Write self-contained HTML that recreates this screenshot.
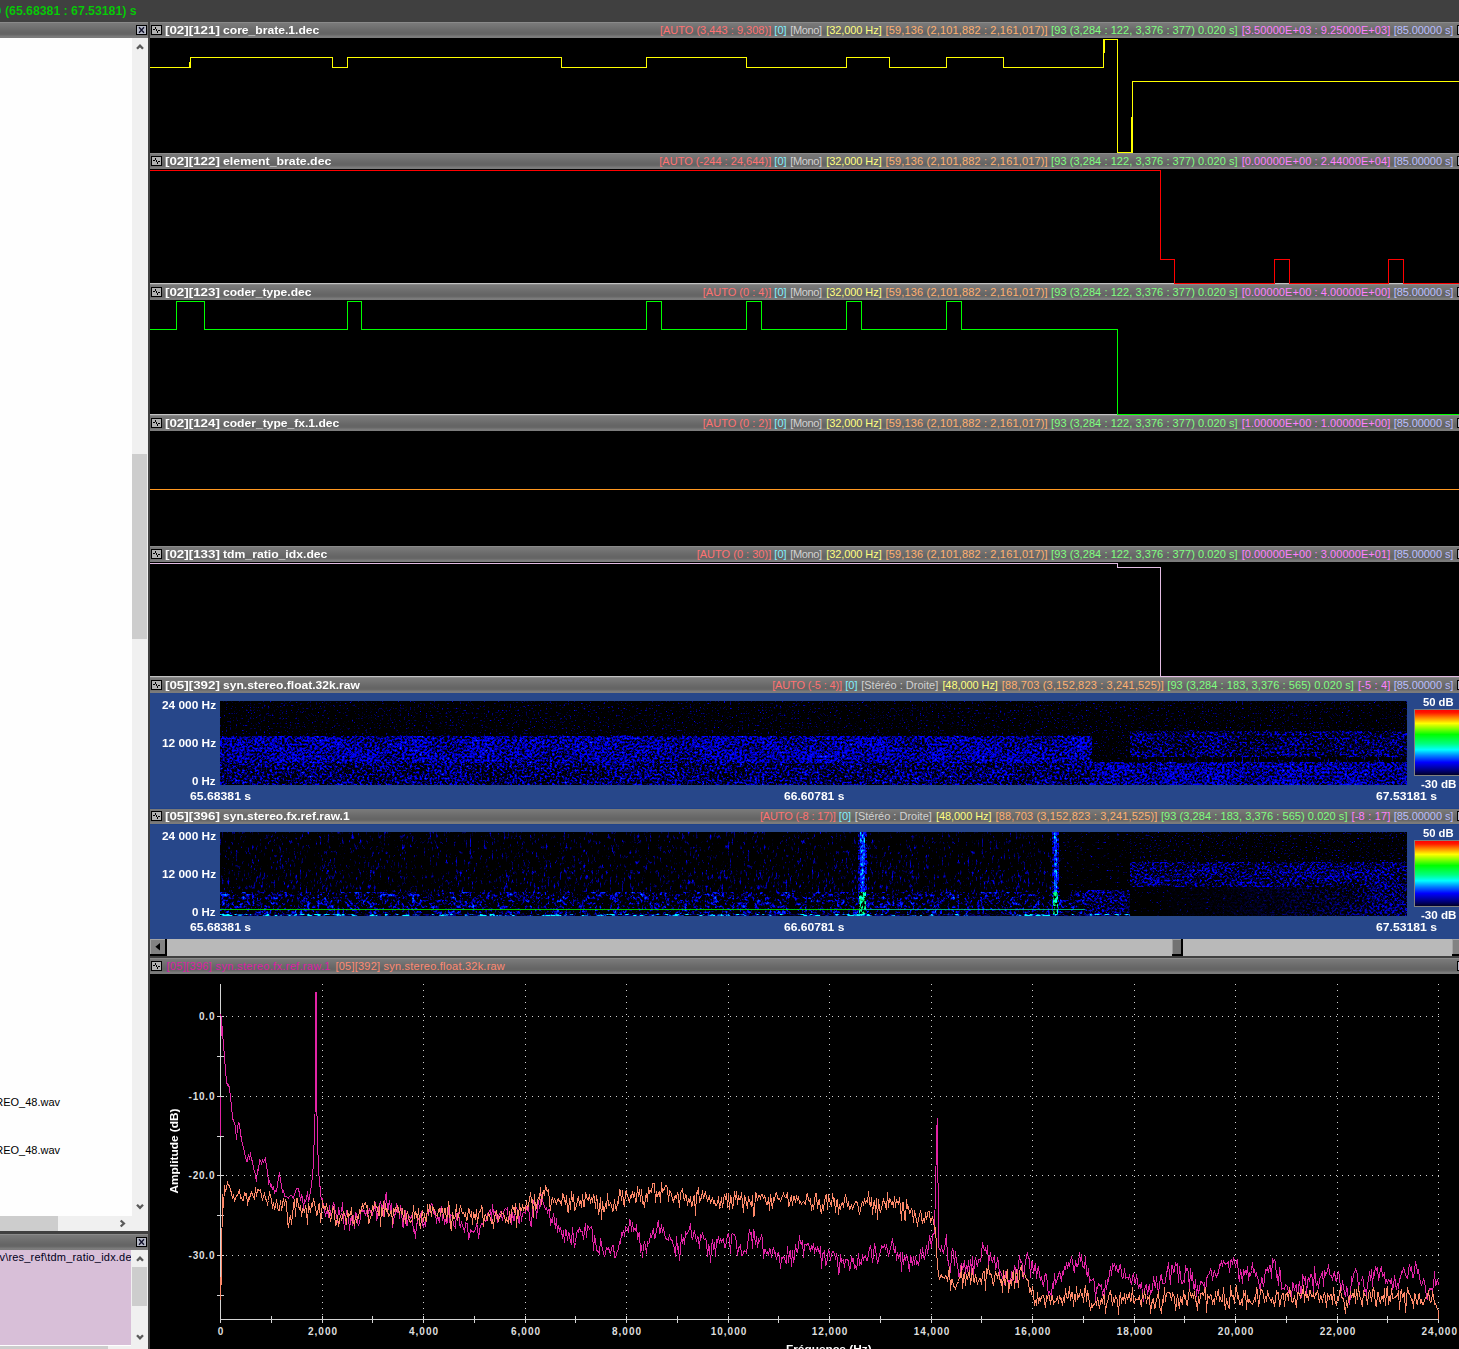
<!DOCTYPE html>
<html><head><meta charset="utf-8"><title>view</title><style>
html,body{margin:0;padding:0;background:#404040}
body{width:1459px;height:1349px;overflow:hidden;background:#404040;position:relative;font-family:"Liberation Sans",sans-serif;}
.t{position:absolute;white-space:pre;}
.a{position:absolute;}
.hd{position:absolute;height:16px;overflow:hidden;background:linear-gradient(to bottom,#8a8a8a 0,#8a8a8a 1px,#7a7a7a 1px,#747474 4px,#6a6a6a 8px,#646464 11px,#686868 13px,#7a7a7a 14px,#7c7c7c 16px);}
.bk{position:absolute;background:#000;}
.bl{position:absolute;background:#27478a;}
svg{position:absolute;left:0;top:0;overflow:visible}
</style></head><body>
<span class="t" style="left:5.40px;top:3px;font-size:12px;line-height:16px;color:#08cc08;font-weight:bold;transform:scaleX(1.0212);transform-origin:0 0;">(65.68381 : 67.53181) s</span>
<span class="t" style="left:-5.60px;top:3px;font-size:12px;line-height:16px;color:#08cc08;font-weight:bold;">0</span>
<div class="hd" style="left:0;top:22px;width:148px"></div>
<svg class="a" style="left:136px;top:25px" width="11" height="10" viewBox="0 0 11 10"><rect x="0" y="0" width="11" height="10" fill="#000"/><rect x="1" y="1" width="9" height="8" fill="#b4b8c6"/><path d="M3 2.2L8 7.8M8 2.2L3 7.8" stroke="#10102a" stroke-width="1.3" fill="none"/></svg>
<div class="a" style="left:0;top:38px;width:132px;height:1178px;background:#fefefe"></div>
<div class="a" style="left:132px;top:38px;width:16px;height:1194px;background:#f0f0f0"></div>
<div class="a" style="left:132px;top:454px;width:15px;height:185px;background:#cdcdcd"></div>
<div class="a" style="left:0;top:1216px;width:132px;height:16px;background:#f0f0f0"></div>
<div class="a" style="left:0;top:1216px;width:58px;height:15px;background:#cdcdcd"></div>
<div class="a" style="left:0;top:1231px;width:148px;height:3px;background:#404040"></div>
<div class="hd" style="left:0;top:1234px;width:148px"></div>
<svg class="a" style="left:136px;top:1237px" width="11" height="10" viewBox="0 0 11 10"><rect x="0" y="0" width="11" height="10" fill="#000"/><rect x="1" y="1" width="9" height="8" fill="#b4b8c6"/><path d="M3 2.2L8 7.8M8 2.2L3 7.8" stroke="#10102a" stroke-width="1.3" fill="none"/></svg>
<div class="a" style="left:0;top:1250px;width:131px;height:95px;background:#d8bfd8"></div>
<div class="a" style="left:131px;top:1250px;width:17px;height:99px;background:#f0f0f0"></div>
<div class="a" style="left:132px;top:1267px;width:15px;height:39px;background:#cdcdcd"></div>
<div class="a" style="left:0;top:1345px;width:131px;height:4px;background:#f0f0f0"></div>
<div class="a" style="left:0;top:1345px;width:131px;height:1px;background:#fff"></div>
<div class="a" style="left:0;top:1346px;width:108px;height:3px;background:#cdcdcd"></div>
<svg width="150" height="1349" viewBox="0 0 150 1349"><path d="M137 48.8L140 45.6L143 48.8" stroke="#5a5a5a" stroke-width="2.3" fill="none" stroke-linejoin="miter"/><path d="M137 1204.7L140 1207.9L143 1204.7" stroke="#5a5a5a" stroke-width="2.3" fill="none" stroke-linejoin="miter"/><path d="M120.7 1220.5L123.9 1223.5L120.7 1226.5" stroke="#5a5a5a" stroke-width="2.3" fill="none" stroke-linejoin="miter"/><path d="M137 1260.8L140 1257.6L143 1260.8" stroke="#5a5a5a" stroke-width="2.3" fill="none" stroke-linejoin="miter"/><path d="M137 1335.2L140 1338.4L143 1335.2" stroke="#5a5a5a" stroke-width="2.3" fill="none" stroke-linejoin="miter"/></svg>
<span class="t" style="left:-4.80px;top:1094px;font-size:11px;line-height:16px;color:#000;letter-spacing:-0.001px;">REO_48.wav</span>
<span class="t" style="left:-4.80px;top:1142px;font-size:11px;line-height:16px;color:#000;letter-spacing:-0.001px;">REO_48.wav</span>
<div class="a" style="left:0;top:1250px;width:131px;height:20px;overflow:hidden"><span class="t" style="left:-0.50px;top:-1px;font-size:11px;line-height:16px;color:#000018;letter-spacing:0.193px;">v\res_ref\tdm_ratio_idx.de</span></div>
<div class="a" style="left:148px;top:22px;width:2px;height:1327px;background:#404040"></div>
<div class="hd" style="left:150px;top:22px;width:1309px"></div>
<svg class="a" style="left:151px;top:25px" width="11" height="10" viewBox="0 0 11 10" shape-rendering="crispEdges"><rect x="0" y="0" width="11" height="10" fill="#000"/><rect x="1" y="1" width="9" height="8" fill="#b2b2b2"/><path d="M2 4h2v1h-2zM7 5h2v1h-2zM4 3h1v1h-1zM5 4h1v2h-1zM6 6h1v1h-1zM4 2h1v1h-1zM6 7h1v1h-1z" fill="#000"/></svg>
<svg class="a" style="left:1457px;top:25px" width="11" height="10" viewBox="0 0 11 10"><rect x="0" y="0" width="11" height="10" fill="#000"/><rect x="1" y="1" width="9" height="8" fill="#b4b8c6"/><path d="M3 2.2L8 7.8M8 2.2L3 7.8" stroke="#10102a" stroke-width="1.3" fill="none"/></svg>
<span class="t" style="left:165.40px;top:22px;font-size:11px;line-height:16px;color:#fff;font-weight:bold;transform:scaleX(1.2134);transform-origin:0 0;">[02][121]</span>
<span class="t" style="left:222.90px;top:22px;font-size:11px;line-height:16px;color:#fff;font-weight:bold;transform:scaleX(1.1013);transform-origin:0 0;">core_brate.1.dec</span>
<span class="t" style="left:1393.70px;top:22px;font-size:11px;line-height:16px;color:#babeff;letter-spacing:-0.077px;">[85.00000 s]</span><span class="t" style="left:1241.70px;top:22px;font-size:11px;line-height:16px;color:#ff80ff;letter-spacing:0.069px;">[3.50000E+03 : 9.25000E+03]</span><span class="t" style="left:1051.10px;top:22px;font-size:11px;line-height:16px;color:#80ff80;letter-spacing:0.064px;">[93 (3,284 : 122, 3,376 : 377) 0.020 s]</span><span class="t" style="left:885.60px;top:22px;font-size:11px;line-height:16px;color:#ffb070;letter-spacing:0.155px;">[59,136 (2,101,882 : 2,161,017)]</span><span class="t" style="left:826.20px;top:22px;font-size:11px;line-height:16px;color:#ffff80;letter-spacing:-0.076px;">[32,000 Hz]</span><span class="t" style="left:790.30px;top:22px;font-size:11px;line-height:16px;color:#d2d2d2;letter-spacing:-0.386px;">[Mono]</span><span class="t" style="left:774.30px;top:22px;font-size:11px;line-height:16px;color:#80f0ff;letter-spacing:0.035px;">[0]</span><span class="t" style="left:659.90px;top:22px;font-size:11px;line-height:16px;color:#ff7272;letter-spacing:0.011px;">[AUTO (3,443 : 9,308)]</span>
<div class="hd" style="left:150px;top:153px;width:1309px"></div>
<svg class="a" style="left:151px;top:156px" width="11" height="10" viewBox="0 0 11 10" shape-rendering="crispEdges"><rect x="0" y="0" width="11" height="10" fill="#000"/><rect x="1" y="1" width="9" height="8" fill="#b2b2b2"/><path d="M2 4h2v1h-2zM7 5h2v1h-2zM4 3h1v1h-1zM5 4h1v2h-1zM6 6h1v1h-1zM4 2h1v1h-1zM6 7h1v1h-1z" fill="#000"/></svg>
<svg class="a" style="left:1457px;top:156px" width="11" height="10" viewBox="0 0 11 10"><rect x="0" y="0" width="11" height="10" fill="#000"/><rect x="1" y="1" width="9" height="8" fill="#b4b8c6"/><path d="M3 2.2L8 7.8M8 2.2L3 7.8" stroke="#10102a" stroke-width="1.3" fill="none"/></svg>
<span class="t" style="left:165.40px;top:153px;font-size:11px;line-height:16px;color:#fff;font-weight:bold;transform:scaleX(1.2134);transform-origin:0 0;">[02][122]</span>
<span class="t" style="left:222.90px;top:153px;font-size:11px;line-height:16px;color:#fff;font-weight:bold;transform:scaleX(1.1221);transform-origin:0 0;">element_brate.dec</span>
<span class="t" style="left:1393.70px;top:153px;font-size:11px;line-height:16px;color:#babeff;letter-spacing:-0.077px;">[85.00000 s]</span><span class="t" style="left:1241.70px;top:153px;font-size:11px;line-height:16px;color:#ff80ff;letter-spacing:0.069px;">[0.00000E+00 : 2.44000E+04]</span><span class="t" style="left:1051.10px;top:153px;font-size:11px;line-height:16px;color:#80ff80;letter-spacing:0.064px;">[93 (3,284 : 122, 3,376 : 377) 0.020 s]</span><span class="t" style="left:885.60px;top:153px;font-size:11px;line-height:16px;color:#ffb070;letter-spacing:0.155px;">[59,136 (2,101,882 : 2,161,017)]</span><span class="t" style="left:826.20px;top:153px;font-size:11px;line-height:16px;color:#ffff80;letter-spacing:-0.076px;">[32,000 Hz]</span><span class="t" style="left:790.30px;top:153px;font-size:11px;line-height:16px;color:#d2d2d2;letter-spacing:-0.386px;">[Mono]</span><span class="t" style="left:774.30px;top:153px;font-size:11px;line-height:16px;color:#80f0ff;letter-spacing:0.035px;">[0]</span><span class="t" style="left:659.29px;top:153px;font-size:11px;line-height:16px;color:#ff7272;letter-spacing:0.011px;">[AUTO (-244 : 24,644)]</span>
<div class="hd" style="left:150px;top:284px;width:1309px"></div>
<svg class="a" style="left:151px;top:287px" width="11" height="10" viewBox="0 0 11 10" shape-rendering="crispEdges"><rect x="0" y="0" width="11" height="10" fill="#000"/><rect x="1" y="1" width="9" height="8" fill="#b2b2b2"/><path d="M2 4h2v1h-2zM7 5h2v1h-2zM4 3h1v1h-1zM5 4h1v2h-1zM6 6h1v1h-1zM4 2h1v1h-1zM6 7h1v1h-1z" fill="#000"/></svg>
<svg class="a" style="left:1457px;top:287px" width="11" height="10" viewBox="0 0 11 10"><rect x="0" y="0" width="11" height="10" fill="#000"/><rect x="1" y="1" width="9" height="8" fill="#b4b8c6"/><path d="M3 2.2L8 7.8M8 2.2L3 7.8" stroke="#10102a" stroke-width="1.3" fill="none"/></svg>
<span class="t" style="left:165.40px;top:284px;font-size:11px;line-height:16px;color:#fff;font-weight:bold;transform:scaleX(1.2134);transform-origin:0 0;">[02][123]</span>
<span class="t" style="left:222.90px;top:284px;font-size:11px;line-height:16px;color:#fff;font-weight:bold;transform:scaleX(1.0954);transform-origin:0 0;">coder_type.dec</span>
<span class="t" style="left:1393.70px;top:284px;font-size:11px;line-height:16px;color:#babeff;letter-spacing:-0.077px;">[85.00000 s]</span><span class="t" style="left:1241.70px;top:284px;font-size:11px;line-height:16px;color:#ff80ff;letter-spacing:0.069px;">[0.00000E+00 : 4.00000E+00]</span><span class="t" style="left:1051.10px;top:284px;font-size:11px;line-height:16px;color:#80ff80;letter-spacing:0.064px;">[93 (3,284 : 122, 3,376 : 377) 0.020 s]</span><span class="t" style="left:885.60px;top:284px;font-size:11px;line-height:16px;color:#ffb070;letter-spacing:0.155px;">[59,136 (2,101,882 : 2,161,017)]</span><span class="t" style="left:826.20px;top:284px;font-size:11px;line-height:16px;color:#ffff80;letter-spacing:-0.076px;">[32,000 Hz]</span><span class="t" style="left:790.30px;top:284px;font-size:11px;line-height:16px;color:#d2d2d2;letter-spacing:-0.386px;">[Mono]</span><span class="t" style="left:774.30px;top:284px;font-size:11px;line-height:16px;color:#80f0ff;letter-spacing:0.035px;">[0]</span><span class="t" style="left:702.81px;top:284px;font-size:11px;line-height:16px;color:#ff7272;letter-spacing:0.010px;">[AUTO (0 : 4)]</span>
<div class="hd" style="left:150px;top:415px;width:1309px"></div>
<svg class="a" style="left:151px;top:418px" width="11" height="10" viewBox="0 0 11 10" shape-rendering="crispEdges"><rect x="0" y="0" width="11" height="10" fill="#000"/><rect x="1" y="1" width="9" height="8" fill="#b2b2b2"/><path d="M2 4h2v1h-2zM7 5h2v1h-2zM4 3h1v1h-1zM5 4h1v2h-1zM6 6h1v1h-1zM4 2h1v1h-1zM6 7h1v1h-1z" fill="#000"/></svg>
<svg class="a" style="left:1457px;top:418px" width="11" height="10" viewBox="0 0 11 10"><rect x="0" y="0" width="11" height="10" fill="#000"/><rect x="1" y="1" width="9" height="8" fill="#b4b8c6"/><path d="M3 2.2L8 7.8M8 2.2L3 7.8" stroke="#10102a" stroke-width="1.3" fill="none"/></svg>
<span class="t" style="left:165.40px;top:415px;font-size:11px;line-height:16px;color:#fff;font-weight:bold;transform:scaleX(1.2134);transform-origin:0 0;">[02][124]</span>
<span class="t" style="left:222.90px;top:415px;font-size:11px;line-height:16px;color:#fff;font-weight:bold;transform:scaleX(1.0995);transform-origin:0 0;">coder_type_fx.1.dec</span>
<span class="t" style="left:1393.70px;top:415px;font-size:11px;line-height:16px;color:#babeff;letter-spacing:-0.077px;">[85.00000 s]</span><span class="t" style="left:1241.70px;top:415px;font-size:11px;line-height:16px;color:#ff80ff;letter-spacing:0.069px;">[1.00000E+00 : 1.00000E+00]</span><span class="t" style="left:1051.10px;top:415px;font-size:11px;line-height:16px;color:#80ff80;letter-spacing:0.064px;">[93 (3,284 : 122, 3,376 : 377) 0.020 s]</span><span class="t" style="left:885.60px;top:415px;font-size:11px;line-height:16px;color:#ffb070;letter-spacing:0.155px;">[59,136 (2,101,882 : 2,161,017)]</span><span class="t" style="left:826.20px;top:415px;font-size:11px;line-height:16px;color:#ffff80;letter-spacing:-0.076px;">[32,000 Hz]</span><span class="t" style="left:790.30px;top:415px;font-size:11px;line-height:16px;color:#d2d2d2;letter-spacing:-0.386px;">[Mono]</span><span class="t" style="left:774.30px;top:415px;font-size:11px;line-height:16px;color:#80f0ff;letter-spacing:0.035px;">[0]</span><span class="t" style="left:702.81px;top:415px;font-size:11px;line-height:16px;color:#ff7272;letter-spacing:0.010px;">[AUTO (0 : 2)]</span>
<div class="hd" style="left:150px;top:546px;width:1309px"></div>
<svg class="a" style="left:151px;top:549px" width="11" height="10" viewBox="0 0 11 10" shape-rendering="crispEdges"><rect x="0" y="0" width="11" height="10" fill="#000"/><rect x="1" y="1" width="9" height="8" fill="#b2b2b2"/><path d="M2 4h2v1h-2zM7 5h2v1h-2zM4 3h1v1h-1zM5 4h1v2h-1zM6 6h1v1h-1zM4 2h1v1h-1zM6 7h1v1h-1z" fill="#000"/></svg>
<svg class="a" style="left:1457px;top:549px" width="11" height="10" viewBox="0 0 11 10"><rect x="0" y="0" width="11" height="10" fill="#000"/><rect x="1" y="1" width="9" height="8" fill="#b4b8c6"/><path d="M3 2.2L8 7.8M8 2.2L3 7.8" stroke="#10102a" stroke-width="1.3" fill="none"/></svg>
<span class="t" style="left:165.40px;top:546px;font-size:11px;line-height:16px;color:#fff;font-weight:bold;transform:scaleX(1.2134);transform-origin:0 0;">[02][133]</span>
<span class="t" style="left:222.90px;top:546px;font-size:11px;line-height:16px;color:#fff;font-weight:bold;transform:scaleX(1.1090);transform-origin:0 0;">tdm_ratio_idx.dec</span>
<span class="t" style="left:1393.70px;top:546px;font-size:11px;line-height:16px;color:#babeff;letter-spacing:-0.077px;">[85.00000 s]</span><span class="t" style="left:1241.70px;top:546px;font-size:11px;line-height:16px;color:#ff80ff;letter-spacing:0.069px;">[0.00000E+00 : 3.00000E+01]</span><span class="t" style="left:1051.10px;top:546px;font-size:11px;line-height:16px;color:#80ff80;letter-spacing:0.064px;">[93 (3,284 : 122, 3,376 : 377) 0.020 s]</span><span class="t" style="left:885.60px;top:546px;font-size:11px;line-height:16px;color:#ffb070;letter-spacing:0.155px;">[59,136 (2,101,882 : 2,161,017)]</span><span class="t" style="left:826.20px;top:546px;font-size:11px;line-height:16px;color:#ffff80;letter-spacing:-0.076px;">[32,000 Hz]</span><span class="t" style="left:790.30px;top:546px;font-size:11px;line-height:16px;color:#d2d2d2;letter-spacing:-0.386px;">[Mono]</span><span class="t" style="left:774.30px;top:546px;font-size:11px;line-height:16px;color:#80f0ff;letter-spacing:0.035px;">[0]</span><span class="t" style="left:696.68px;top:546px;font-size:11px;line-height:16px;color:#ff7272;letter-spacing:0.011px;">[AUTO (0 : 30)]</span>
<div class="hd" style="left:150px;top:677px;width:1309px"></div>
<svg class="a" style="left:151px;top:680px" width="11" height="10" viewBox="0 0 11 10" shape-rendering="crispEdges"><rect x="0" y="0" width="11" height="10" fill="#000"/><rect x="1" y="1" width="9" height="8" fill="#b2b2b2"/><path d="M2 4h2v1h-2zM7 5h2v1h-2zM4 3h1v1h-1zM5 4h1v2h-1zM6 6h1v1h-1zM4 2h1v1h-1zM6 7h1v1h-1z" fill="#000"/></svg>
<svg class="a" style="left:1457px;top:680px" width="11" height="10" viewBox="0 0 11 10"><rect x="0" y="0" width="11" height="10" fill="#000"/><rect x="1" y="1" width="9" height="8" fill="#b4b8c6"/><path d="M3 2.2L8 7.8M8 2.2L3 7.8" stroke="#10102a" stroke-width="1.3" fill="none"/></svg>
<span class="t" style="left:165.40px;top:677px;font-size:11px;line-height:16px;color:#fff;font-weight:bold;transform:scaleX(1.2134);transform-origin:0 0;">[05][392]</span>
<span class="t" style="left:222.90px;top:677px;font-size:11px;line-height:16px;color:#fff;font-weight:bold;transform:scaleX(1.0976);transform-origin:0 0;">syn.stereo.float.32k.raw</span>
<span class="t" style="left:1393.70px;top:677px;font-size:11px;line-height:16px;color:#babeff;letter-spacing:-0.077px;">[85.00000 s]</span><span class="t" style="left:1357.90px;top:677px;font-size:11px;line-height:16px;color:#ff80ff;letter-spacing:0.174px;">[-5 : 4]</span><span class="t" style="left:1167.30px;top:677px;font-size:11px;line-height:16px;color:#80ff80;letter-spacing:0.064px;">[93 (3,284 : 183, 3,376 : 565) 0.020 s]</span><span class="t" style="left:1001.80px;top:677px;font-size:11px;line-height:16px;color:#ffb070;letter-spacing:0.155px;">[88,703 (3,152,823 : 3,241,525)]</span><span class="t" style="left:942.40px;top:677px;font-size:11px;line-height:16px;color:#ffff80;letter-spacing:-0.076px;">[48,000 Hz]</span><span class="t" style="left:861.20px;top:677px;font-size:11px;line-height:16px;color:#d2d2d2;letter-spacing:-0.002px;">[Stéréo : Droite]</span><span class="t" style="left:845.20px;top:677px;font-size:11px;line-height:16px;color:#80f0ff;letter-spacing:0.035px;">[0]</span><span class="t" style="left:772.20px;top:677px;font-size:11px;line-height:16px;color:#ff7272;letter-spacing:-0.144px;">[AUTO (-5 : 4)]</span>
<div class="hd" style="left:150px;top:808px;width:1309px"></div>
<svg class="a" style="left:151px;top:811px" width="11" height="10" viewBox="0 0 11 10" shape-rendering="crispEdges"><rect x="0" y="0" width="11" height="10" fill="#000"/><rect x="1" y="1" width="9" height="8" fill="#b2b2b2"/><path d="M2 4h2v1h-2zM7 5h2v1h-2zM4 3h1v1h-1zM5 4h1v2h-1zM6 6h1v1h-1zM4 2h1v1h-1zM6 7h1v1h-1z" fill="#000"/></svg>
<svg class="a" style="left:1457px;top:811px" width="11" height="10" viewBox="0 0 11 10"><rect x="0" y="0" width="11" height="10" fill="#000"/><rect x="1" y="1" width="9" height="8" fill="#b4b8c6"/><path d="M3 2.2L8 7.8M8 2.2L3 7.8" stroke="#10102a" stroke-width="1.3" fill="none"/></svg>
<span class="t" style="left:165.40px;top:808px;font-size:11px;line-height:16px;color:#fff;font-weight:bold;transform:scaleX(1.2134);transform-origin:0 0;">[05][396]</span>
<span class="t" style="left:222.90px;top:808px;font-size:11px;line-height:16px;color:#fff;font-weight:bold;transform:scaleX(1.0936);transform-origin:0 0;">syn.stereo.fx.ref.raw.1</span>
<span class="t" style="left:1393.70px;top:808px;font-size:11px;line-height:16px;color:#babeff;letter-spacing:-0.077px;">[85.00000 s]</span><span class="t" style="left:1351.54px;top:808px;font-size:11px;line-height:16px;color:#ff80ff;letter-spacing:0.182px;">[-8 : 17]</span><span class="t" style="left:1160.94px;top:808px;font-size:11px;line-height:16px;color:#80ff80;letter-spacing:0.064px;">[93 (3,284 : 183, 3,376 : 565) 0.020 s]</span><span class="t" style="left:995.44px;top:808px;font-size:11px;line-height:16px;color:#ffb070;letter-spacing:0.155px;">[88,703 (3,152,823 : 3,241,525)]</span><span class="t" style="left:936.04px;top:808px;font-size:11px;line-height:16px;color:#ffff80;letter-spacing:-0.076px;">[48,000 Hz]</span><span class="t" style="left:854.84px;top:808px;font-size:11px;line-height:16px;color:#d2d2d2;letter-spacing:-0.002px;">[Stéréo : Droite]</span><span class="t" style="left:838.84px;top:808px;font-size:11px;line-height:16px;color:#80f0ff;letter-spacing:0.035px;">[0]</span><span class="t" style="left:759.90px;top:808px;font-size:11px;line-height:16px;color:#ff7272;letter-spacing:-0.146px;">[AUTO (-8 : 17)]</span>
<div class="bk" style="left:150px;top:38px;width:1309px;height:115px"></div>
<div class="bk" style="left:150px;top:169px;width:1309px;height:115px"></div>
<div class="bk" style="left:150px;top:300px;width:1309px;height:115px"></div>
<div class="bk" style="left:150px;top:431px;width:1309px;height:115px"></div>
<div class="bk" style="left:150px;top:562px;width:1309px;height:115px"></div>
<div class="bl" style="left:150px;top:693px;width:1309px;height:115px"></div>
<div class="bl" style="left:150px;top:824px;width:1309px;height:115px"></div>
<div class="a" style="left:150px;top:808px;width:1309px;height:1px;background:#20438a"></div><div class="a" style="left:150px;top:824px;width:1309px;height:1px;background:#21448a"></div>
<svg style="left:150px;overflow:hidden" width="1309" height="700" viewBox="150 0 1309 700" shape-rendering="crispEdges" fill="none" stroke-width="1">
<path d="M150 283.5H1460M150 414.5H1460M150 676.5H1460" stroke="#c2c2c2"/>
<path d="M149.5 67.5H190.5V57.5H332.5V67.5H347.5V57.5H561.5V67.5H646.5V57.5H746.5V67.5H846.5V57.5H889.5V67.5H946.5V57.5H1003.5V67.5H1103.5V39.5H1117.5V152.5H1132.5V81.5H1460.5" stroke="#ffff00"/>
<path d="M1104.5 39V53M1131.5 117V152M189.5 62V67M646.5 62V67M846.5 62V67" stroke="#ffff00"/>
<path d="M149.5 170.5H1160.5V259.5H1174.5V283.5H1274.5V259.5H1289.5V283.5H1388.5V259.5H1403.5V283.5H1460.5" stroke="#ff0000"/>
<path d="M149.5 329.5H176.5V301.5H204.5V329.5H347.5V301.5H361.5V329.5H646.5V301.5H661.5V329.5H746.5V301.5H761.5V329.5H846.5V301.5H861.5V329.5H946.5V301.5H961.5V329.5H1117.5V414.5H1460.5" stroke="#00ff00"/>
<path d="M149.5 489.5H1460.5" stroke="#ff9820"/>
<path d="M149.5 563.5H1117.5V567.5H1160.5V676.5H1460.5" stroke="#e2bce2"/>
</svg>
<svg width="1459" height="960" viewBox="0 0 1459 960"><defs>
<filter id="nsp" x="0" y="0" width="100%" height="100%" color-interpolation-filters="sRGB"><feTurbulence type="fractalNoise" baseFrequency="0.5 0.6" numOctaves="3" seed="5"/><feColorMatrix type="matrix" values="1 0 0 0 0 0 1 0 0 0 0 0 1 0 0 0 0 0 0 1" result="a"/><feColorMatrix type="matrix" values="0.0 0 0 0 -0.000  0.0 0 0 0 -0.000  4 0 0 0 -2.500  0 0 0 0 1"/></filter>
<filter id="nsp2" x="0" y="0" width="100%" height="100%" color-interpolation-filters="sRGB"><feTurbulence type="fractalNoise" baseFrequency="0.5 0.2" numOctaves="3" seed="9"/><feColorMatrix type="matrix" values="1 0 0 0 0 0 1 0 0 0 0 0 1 0 0 0 0 0 0 1" result="a"/><feTurbulence type="fractalNoise" baseFrequency="0.12 0.02" numOctaves="2" seed="49"/><feColorMatrix type="matrix" values="1 0 0 0 0 0 1 0 0 0 0 0 1 0 0 0 0 0 0 1" result="b"/><feComposite in="a" in2="b" operator="arithmetic" k1="0" k2="1" k3="0.3" k4="-0.15"/><feColorMatrix type="matrix" values="0.0 0 0 0 -0.000  0.0 0 0 0 -0.000  4 0 0 0 -2.340  0 0 0 0 1"/></filter>
<filter id="nde" x="0" y="0" width="100%" height="100%" color-interpolation-filters="sRGB"><feTurbulence type="fractalNoise" baseFrequency="0.4 0.5" numOctaves="3" seed="2"/><feColorMatrix type="matrix" values="1 0 0 0 0 0 1 0 0 0 0 0 1 0 0 0 0 0 0 1" result="a"/><feTurbulence type="fractalNoise" baseFrequency="0.03 0.06" numOctaves="2" seed="42"/><feColorMatrix type="matrix" values="1 0 0 0 0 0 1 0 0 0 0 0 1 0 0 0 0 0 0 1" result="b"/><feComposite in="a" in2="b" operator="arithmetic" k1="0" k2="1" k3="0.18" k4="-0.09"/><feColorMatrix type="matrix" values="0.8 0 0 0 -0.592  2.5 0 0 0 -1.850  4.2 0 0 0 -1.554  0 0 0 0 1"/></filter>
<filter id="nde2" x="0" y="0" width="100%" height="100%" color-interpolation-filters="sRGB"><feTurbulence type="fractalNoise" baseFrequency="0.4 0.5" numOctaves="3" seed="3"/><feColorMatrix type="matrix" values="1 0 0 0 0 0 1 0 0 0 0 0 1 0 0 0 0 0 0 1" result="a"/><feTurbulence type="fractalNoise" baseFrequency="0.03 0.06" numOctaves="2" seed="43"/><feColorMatrix type="matrix" values="1 0 0 0 0 0 1 0 0 0 0 0 1 0 0 0 0 0 0 1" result="b"/><feComposite in="a" in2="b" operator="arithmetic" k1="0" k2="1" k3="0.18" k4="-0.09"/><feColorMatrix type="matrix" values="0.8 0 0 0 -0.592  2.5 0 0 0 -1.850  4.2 0 0 0 -1.827  0 0 0 0 1"/></filter>
<filter id="nme" x="0" y="0" width="100%" height="100%" color-interpolation-filters="sRGB"><feTurbulence type="fractalNoise" baseFrequency="0.4 0.5" numOctaves="3" seed="7"/><feColorMatrix type="matrix" values="1 0 0 0 0 0 1 0 0 0 0 0 1 0 0 0 0 0 0 1" result="a"/><feTurbulence type="fractalNoise" baseFrequency="0.03 0.06" numOctaves="2" seed="47"/><feColorMatrix type="matrix" values="1 0 0 0 0 0 1 0 0 0 0 0 1 0 0 0 0 0 0 1" result="b"/><feComposite in="a" in2="b" operator="arithmetic" k1="0" k2="1" k3="0.2" k4="-0.1"/><feColorMatrix type="matrix" values="0.0 0 0 0 -0.000  0.0 0 0 0 -0.000  4.2 0 0 0 -1.890  0 0 0 0 1"/></filter>
<filter id="nlo" x="0" y="0" width="100%" height="100%" color-interpolation-filters="sRGB"><feTurbulence type="fractalNoise" baseFrequency="0.4 0.35" numOctaves="3" seed="11"/><feColorMatrix type="matrix" values="1 0 0 0 0 0 1 0 0 0 0 0 1 0 0 0 0 0 0 1" result="a"/><feTurbulence type="fractalNoise" baseFrequency="0.1 0.1" numOctaves="2" seed="51"/><feColorMatrix type="matrix" values="1 0 0 0 0 0 1 0 0 0 0 0 1 0 0 0 0 0 0 1" result="b"/><feComposite in="a" in2="b" operator="arithmetic" k1="0" k2="1" k3="0.5" k4="-0.25"/><feColorMatrix type="matrix" values="0.0 0 0 0 -0.000  2.5 0 0 0 -1.800  4.5 0 0 0 -2.250  0 0 0 0 1"/></filter>
<filter id="nbr" x="0" y="0" width="100%" height="100%" color-interpolation-filters="sRGB"><feTurbulence type="fractalNoise" baseFrequency="0.4 0.3" numOctaves="3" seed="4"/><feColorMatrix type="matrix" values="1 0 0 0 0 0 1 0 0 0 0 0 1 0 0 0 0 0 0 1" result="a"/><feColorMatrix type="matrix" values="0.0 0 0 0 -0.000  6.0 0 0 0 -2.400  3 0 0 0 -1.200  0 0 0 0 1"/></filter>
<filter id="nbb" x="0" y="0" width="100%" height="100%" color-interpolation-filters="sRGB"><feTurbulence type="fractalNoise" baseFrequency="0.5 0.3" numOctaves="3" seed="6"/><feColorMatrix type="matrix" values="1 0 0 0 0 0 1 0 0 0 0 0 1 0 0 0 0 0 0 1" result="a"/><feColorMatrix type="matrix" values="0.0 0 0 0 -0.000  3.0 0 0 0 -1.320  6 0 0 0 -1.320  0 0 0 0 1"/></filter>
<filter id="nsp3" x="0" y="0" width="100%" height="100%" color-interpolation-filters="sRGB"><feTurbulence type="fractalNoise" baseFrequency="0.5 0.2" numOctaves="3" seed="19"/><feColorMatrix type="matrix" values="1 0 0 0 0 0 1 0 0 0 0 0 1 0 0 0 0 0 0 1" result="a"/><feTurbulence type="fractalNoise" baseFrequency="0.12 0.02" numOctaves="2" seed="59"/><feColorMatrix type="matrix" values="1 0 0 0 0 0 1 0 0 0 0 0 1 0 0 0 0 0 0 1" result="b"/><feComposite in="a" in2="b" operator="arithmetic" k1="0" k2="1" k3="0.3" k4="-0.15"/><feColorMatrix type="matrix" values="0.0 0 0 0 -0.000  0.0 0 0 0 -0.000  4 0 0 0 -2.460  0 0 0 0 1"/></filter>
<filter id="nsp4" x="0" y="0" width="100%" height="100%" color-interpolation-filters="sRGB"><feTurbulence type="fractalNoise" baseFrequency="0.3 0.5" numOctaves="3" seed="21"/><feColorMatrix type="matrix" values="1 0 0 0 0 0 1 0 0 0 0 0 1 0 0 0 0 0 0 1" result="a"/><feColorMatrix type="matrix" values="0.0 0 0 0 -0.000  0.0 0 0 0 -0.000  4 0 0 0 -2.640  0 0 0 0 1"/></filter>
<filter id="nbt" x="0" y="0" width="100%" height="100%" color-interpolation-filters="sRGB"><feTurbulence type="fractalNoise" baseFrequency="0.2 0.6" numOctaves="3" seed="14"/><feColorMatrix type="matrix" values="1 0 0 0 0 0 1 0 0 0 0 0 1 0 0 0 0 0 0 1" result="a"/><feTurbulence type="fractalNoise" baseFrequency="0.04 0.3" numOctaves="2" seed="54"/><feColorMatrix type="matrix" values="1 0 0 0 0 0 1 0 0 0 0 0 1 0 0 0 0 0 0 1" result="b"/><feComposite in="a" in2="b" operator="arithmetic" k1="0" k2="1" k3="0.5" k4="-0.25"/><feColorMatrix type="matrix" values="0.0 0 0 0 -0.000  6.0 0 0 0 -3.120  3.5 0 0 0 -1.260  0 0 0 0 1"/></filter>
<linearGradient id="cb" x1="0" y1="0" x2="0" y2="1"><stop offset="0" stop-color="#ff0000"/><stop offset="0.05" stop-color="#ff1800"/><stop offset="0.12" stop-color="#ff8000"/><stop offset="0.21" stop-color="#ffff00"/><stop offset="0.38" stop-color="#00ff00"/><stop offset="0.52" stop-color="#00ff80"/><stop offset="0.61" stop-color="#00ffff"/><stop offset="0.70" stop-color="#0080ff"/><stop offset="0.80" stop-color="#0000ff"/><stop offset="0.92" stop-color="#000080"/><stop offset="1" stop-color="#000020"/></linearGradient>
<linearGradient id="fg" gradientUnits="userSpaceOnUse" x1="1150" y1="0" x2="1407" y2="0"><stop offset="0" stop-color="#000"/><stop offset="0.45" stop-color="#3a3a3a"/><stop offset="1" stop-color="#fff"/></linearGradient><mask id="fade" maskUnits="userSpaceOnUse" x="1130" y="887" width="277" height="29"><rect x="1130" y="887" width="277" height="29" fill="url(#fg)"/></mask>
</defs>
<rect x="220" y="701" width="1187" height="84" fill="#000"/>
<rect x="220" y="701" width="1187" height="35" fill="#000" filter="url(#nsp)"/>
<rect x="220" y="736" width="872" height="27" fill="#000" filter="url(#nde)"/>
<rect x="220" y="763" width="872" height="22" fill="#000" filter="url(#nde2)"/>
<rect x="1092" y="736" width="38" height="26" fill="#000" filter="url(#nsp)"/>
<rect x="1092" y="762" width="315" height="23" fill="#000" filter="url(#nde)"/>
<rect x="1130" y="731" width="277" height="26" fill="#000" filter="url(#nme)"/>
<rect x="1130" y="757" width="277" height="5" fill="#000" filter="url(#nsp2)"/>
<rect x="220" y="832" width="1187" height="84" fill="#000"/>
<rect x="220" y="832" width="910" height="38" fill="#000" filter="url(#nsp3)"/>
<rect x="220" y="870" width="910" height="22" fill="#000" filter="url(#nsp2)"/>
<rect x="1130" y="832" width="277" height="30" fill="#000" filter="url(#nsp)"/>
<rect x="1060" y="832" width="70" height="58" fill="#000" filter="url(#nsp4)"/>
<rect x="220" y="892" width="910" height="24" fill="#000" filter="url(#nlo)"/>
<rect x="1130" y="887" width="277" height="29" fill="#000" filter="url(#nsp4)"/>
<g mask="url(#fade)"><rect x="1130" y="887" width="277" height="29" fill="#000" filter="url(#nme)"/></g>
<rect x="1130" y="862" width="277" height="25" fill="#000" filter="url(#nme)"/>
<rect x="858" y="832" width="9" height="84" fill="#000" filter="url(#nde)"/>
<rect x="860" y="832" width="5" height="62" fill="#000" filter="url(#nbb)"/>
<rect x="859" y="892" width="7" height="24" fill="#000" filter="url(#nbr)"/>
<rect x="1052" y="832" width="7" height="84" fill="#000" filter="url(#nde)"/>
<rect x="1054" y="832" width="3" height="62" fill="#000" filter="url(#nbb)"/>
<rect x="1053" y="892" width="5" height="24" fill="#000" filter="url(#nbr)"/>
<rect x="1085" y="890" width="45" height="23" fill="#000" filter="url(#nme)"/>
<rect x="220" y="909" width="640" height="1" fill="#00f000" opacity="0.8"/><rect x="860" y="909" width="225" height="1" fill="#00e0a0" opacity="0.75"/>
<rect x="220" y="914" width="910" height="2" fill="#000" filter="url(#nbt)"/>
<rect x="1414.5" y="709.5" width="50" height="66" fill="url(#cb)" stroke="#808080" stroke-width="1"/>
<rect x="1414.5" y="840.5" width="50" height="66" fill="url(#cb)" stroke="#808080" stroke-width="1"/>
</svg>
<span class="t" style="left:161.70px;top:697px;font-size:11px;line-height:16px;color:#fff;font-weight:bold;transform:scaleX(1.0788);transform-origin:0 0;">24 000 Hz</span>
<span class="t" style="left:161.70px;top:735px;font-size:11px;line-height:16px;color:#fff;font-weight:bold;transform:scaleX(1.0788);transform-origin:0 0;">12 000 Hz</span>
<span class="t" style="left:192.20px;top:773px;font-size:11px;line-height:16px;color:#fff;font-weight:bold;transform:scaleX(1.0434);transform-origin:0 0;">0 Hz</span>
<span class="t" style="left:190.10px;top:788px;font-size:11px;line-height:16px;color:#fff;font-weight:bold;transform:scaleX(1.1098);transform-origin:0 0;">65.68381 s</span>
<span class="t" style="left:783.50px;top:788px;font-size:11px;line-height:16px;color:#fff;font-weight:bold;transform:scaleX(1.0971);transform-origin:0 0;">66.60781 s</span>
<span class="t" style="left:1376.30px;top:788px;font-size:11px;line-height:16px;color:#fff;font-weight:bold;transform:scaleX(1.1061);transform-origin:0 0;">67.53181 s</span>
<span class="t" style="left:1423.40px;top:694px;font-size:11px;line-height:16px;color:#fff;font-weight:bold;transform:scaleX(1.0215);transform-origin:0 0;">50 dB</span>
<span class="t" style="left:1420.50px;top:776px;font-size:11px;line-height:16px;color:#fff;font-weight:bold;transform:scaleX(1.0560);transform-origin:0 0;">-30 dB</span>
<span class="t" style="left:161.70px;top:828px;font-size:11px;line-height:16px;color:#fff;font-weight:bold;transform:scaleX(1.0788);transform-origin:0 0;">24 000 Hz</span>
<span class="t" style="left:161.70px;top:866px;font-size:11px;line-height:16px;color:#fff;font-weight:bold;transform:scaleX(1.0788);transform-origin:0 0;">12 000 Hz</span>
<span class="t" style="left:192.20px;top:904px;font-size:11px;line-height:16px;color:#fff;font-weight:bold;transform:scaleX(1.0434);transform-origin:0 0;">0 Hz</span>
<span class="t" style="left:190.10px;top:919px;font-size:11px;line-height:16px;color:#fff;font-weight:bold;transform:scaleX(1.1098);transform-origin:0 0;">65.68381 s</span>
<span class="t" style="left:783.50px;top:919px;font-size:11px;line-height:16px;color:#fff;font-weight:bold;transform:scaleX(1.0971);transform-origin:0 0;">66.60781 s</span>
<span class="t" style="left:1376.30px;top:919px;font-size:11px;line-height:16px;color:#fff;font-weight:bold;transform:scaleX(1.1061);transform-origin:0 0;">67.53181 s</span>
<span class="t" style="left:1423.40px;top:825px;font-size:11px;line-height:16px;color:#fff;font-weight:bold;transform:scaleX(1.0215);transform-origin:0 0;">50 dB</span>
<span class="t" style="left:1420.50px;top:907px;font-size:11px;line-height:16px;color:#fff;font-weight:bold;transform:scaleX(1.0560);transform-origin:0 0;">-30 dB</span>
<div class="a" style="left:150px;top:939px;width:1309px;height:17px;background:#b9b9b9"></div>
<div class="a" style="left:150px;top:939px;width:17px;height:17px;background:#000"></div>
<div class="a" style="left:150px;top:939px;width:15px;height:15px;background:#828282;border-left:1px solid #a4a4a4;border-top:1px solid #a4a4a4;box-sizing:border-box"></div>
<svg class="a" style="left:154px;top:942px" width="8" height="10" viewBox="0 0 8 10"><path d="M6 1V8.6L1.4 4.8Z" fill="#000"/></svg>
<div class="a" style="left:1172px;top:939px;width:11px;height:17px;background:#000"></div>
<div class="a" style="left:1172px;top:939px;width:9px;height:15px;background:#727272;border-left:1px solid #9a9a9a;border-top:1px solid #9a9a9a;box-sizing:border-box"></div>
<div class="a" style="left:1452px;top:939px;width:8px;height:17px;background:#000"></div>
<div class="a" style="left:1452px;top:939px;width:8px;height:15px;background:#828282;border-left:1px solid #a4a4a4;border-top:1px solid #a4a4a4;box-sizing:border-box"></div>
<div class="a" style="left:150px;top:956px;width:1309px;height:2px;background:#404040"></div>
<div class="hd" style="left:150px;top:958px;width:1309px"></div>
<svg class="a" style="left:151px;top:961px" width="11" height="10" viewBox="0 0 11 10" shape-rendering="crispEdges"><rect x="0" y="0" width="11" height="10" fill="#000"/><rect x="1" y="1" width="9" height="8" fill="#b2b2b2"/><path d="M2 4h2v1h-2zM7 5h2v1h-2zM4 3h1v1h-1zM5 4h1v2h-1zM6 6h1v1h-1zM4 2h1v1h-1zM6 7h1v1h-1z" fill="#000"/></svg>
<svg class="a" style="left:1457px;top:961px" width="11" height="10" viewBox="0 0 11 10"><rect x="0" y="0" width="11" height="10" fill="#000"/><rect x="1" y="1" width="9" height="8" fill="#b4b8c6"/><path d="M3 2.2L8 7.8M8 2.2L3 7.8" stroke="#10102a" stroke-width="1.3" fill="none"/></svg>
<span class="t" style="left:166.40px;top:958px;font-size:11px;line-height:16px;color:#dc1ea6;letter-spacing:0.332px;">[05][396] syn.stereo.fx.ref.raw.1</span>
<span class="t" style="left:335.50px;top:958px;font-size:11px;line-height:16px;color:#ff8a72;letter-spacing:0.220px;">[05][392] syn.stereo.float.32k.raw</span>
<div class="bk" style="left:150px;top:974px;width:1309px;height:375px"></div>
<svg width="1459" height="1349" viewBox="0 0 1459 1349" shape-rendering="crispEdges" fill="none">
<line x1="322.5" y1="984" x2="322.5" y2="1319" stroke="#d0d0d0" stroke-dasharray="1 5"/>
<line x1="423.5" y1="984" x2="423.5" y2="1319" stroke="#d0d0d0" stroke-dasharray="1 5"/>
<line x1="525.5" y1="984" x2="525.5" y2="1319" stroke="#d0d0d0" stroke-dasharray="1 5"/>
<line x1="626.5" y1="984" x2="626.5" y2="1319" stroke="#d0d0d0" stroke-dasharray="1 5"/>
<line x1="728.5" y1="984" x2="728.5" y2="1319" stroke="#d0d0d0" stroke-dasharray="1 5"/>
<line x1="829.5" y1="984" x2="829.5" y2="1319" stroke="#d0d0d0" stroke-dasharray="1 5"/>
<line x1="931.5" y1="984" x2="931.5" y2="1319" stroke="#d0d0d0" stroke-dasharray="1 5"/>
<line x1="1032.5" y1="984" x2="1032.5" y2="1319" stroke="#d0d0d0" stroke-dasharray="1 5"/>
<line x1="1134.5" y1="984" x2="1134.5" y2="1319" stroke="#d0d0d0" stroke-dasharray="1 5"/>
<line x1="1235.5" y1="984" x2="1235.5" y2="1319" stroke="#d0d0d0" stroke-dasharray="1 5"/>
<line x1="1337.5" y1="984" x2="1337.5" y2="1319" stroke="#d0d0d0" stroke-dasharray="1 5"/>
<line x1="1438.5" y1="984" x2="1438.5" y2="1319" stroke="#d0d0d0" stroke-dasharray="1 5"/>
<line x1="226" y1="1016.5" x2="1439" y2="1016.5" stroke="#d0d0d0" stroke-dasharray="1 5"/>
<line x1="226" y1="1096.5" x2="1439" y2="1096.5" stroke="#d0d0d0" stroke-dasharray="1 5"/>
<line x1="226" y1="1175.5" x2="1439" y2="1175.5" stroke="#d0d0d0" stroke-dasharray="1 5"/>
<line x1="226" y1="1255.5" x2="1439" y2="1255.5" stroke="#d0d0d0" stroke-dasharray="1 5"/>
<path d="M220.5 984V1320M220 1319.5H1439" stroke="#d4d4d4"/>
<path d="M217 1016.5H224M217 1096.5H224M217 1175.5H224M217 1255.5H224M217 1056.5H224M217 1136.5H224M217 1215.5H224M217 1295.5H224M220.5 1316V1323M271.5 1316V1323M322.5 1316V1323M372.5 1316V1323M423.5 1316V1323M474.5 1316V1323M525.5 1316V1323M575.5 1316V1323M626.5 1316V1323M677.5 1316V1323M728.5 1316V1323M778.5 1316V1323M829.5 1316V1323M880.5 1316V1323M931.5 1316V1323M981.5 1316V1323M1032.5 1316V1323M1083.5 1316V1323M1134.5 1316V1323M1184.5 1316V1323M1235.5 1316V1323M1286.5 1316V1323M1337.5 1316V1323M1387.5 1316V1323M1438.5 1316V1323" stroke="#d4d4d4"/>
<polyline points="220.5,1014.5 221.5,1017.6 222.5,1033.0 223.5,1045.1 224.5,1056.7 225.5,1070.3 226.5,1081.4 227.5,1085.4 228.5,1085.0 229.5,1087.9 230.5,1097.0 231.5,1106.2 232.5,1117.6 233.5,1121.2 234.5,1123.4 235.5,1127.1 236.5,1140.3 237.5,1127.2 238.5,1123.0 239.5,1123.6 240.5,1133.3 241.5,1139.5 242.5,1143.8 243.5,1148.2 244.5,1152.4 245.5,1157.0 246.5,1161.6 247.5,1161.0 248.5,1154.2 249.5,1160.4 250.5,1152.5 251.5,1160.3 252.5,1160.4 253.5,1168.8 254.5,1170.5 255.5,1176.3 256.5,1182.1 257.5,1169.4 258.5,1170.0 259.5,1159.7 260.5,1160.1 261.5,1163.5 262.5,1160.3 263.5,1161.9 264.5,1160.6 265.5,1157.5 266.5,1168.4 267.5,1169.2 268.5,1184.7 269.5,1180.0 270.5,1185.8 271.5,1184.7 272.5,1190.1 273.5,1186.0 274.5,1193.5 275.5,1190.6 276.5,1191.6 277.5,1184.6 278.5,1178.2 279.5,1172.5 280.5,1181.9 281.5,1184.7 282.5,1193.4 283.5,1189.7 284.5,1196.4 285.5,1197.0 286.5,1196.9 287.5,1197.4 288.5,1198.1 289.5,1196.3 290.5,1195.9 291.5,1195.7 292.5,1196.9 293.5,1198.3 294.5,1193.8 295.5,1191.8 296.5,1188.3 297.5,1188.2 298.5,1188.9 299.5,1194.0 300.5,1200.8 301.5,1195.4 302.5,1197.0 303.5,1208.5 304.5,1199.9 305.5,1201.3 306.5,1199.3 307.5,1190.8 308.5,1202.2 309.5,1198.2 310.5,1190.2 311.5,1185.6 313.3,1166.0 315.0,1116.0 315.8,992.0 316.4,992.0 317.0,1116.0 318.4,1169.0 320.9,1196.0 321.5,1199.5 322.5,1198.6 323.5,1206.5 324.5,1209.9 325.5,1215.3 326.5,1212.9 327.5,1208.9 328.5,1218.0 329.5,1205.4 330.5,1214.9 331.5,1217.4 332.5,1208.8 333.5,1201.7 334.5,1206.5 335.5,1213.0 336.5,1215.3 337.5,1222.5 338.5,1207.4 339.5,1212.8 340.5,1217.5 341.5,1212.5 342.5,1202.5 343.5,1219.1 344.5,1229.5 345.5,1220.9 346.5,1209.7 347.5,1212.4 348.5,1216.2 349.5,1230.9 350.5,1219.3 351.5,1216.1 352.5,1226.0 353.5,1215.3 354.5,1228.5 355.5,1212.7 356.5,1213.9 357.5,1221.4 358.5,1226.3 359.5,1221.3 360.5,1218.6 361.5,1206.6 362.5,1211.4 363.5,1211.0 364.5,1210.6 365.5,1216.4 366.5,1210.2 367.5,1216.9 368.5,1211.8 369.5,1209.3 370.5,1211.5 371.5,1213.3 372.5,1215.9 373.5,1207.5 374.5,1208.4 375.5,1202.5 376.5,1219.8 377.5,1218.5 378.5,1207.5 379.5,1205.8 380.5,1201.0 381.5,1206.7 382.5,1205.4 383.5,1217.1 384.5,1202.5 385.5,1197.0 386.5,1191.6 387.5,1213.8 388.5,1207.3 389.5,1199.7 390.5,1210.6 391.5,1203.1 392.5,1228.2 393.5,1220.1 394.5,1216.8 395.5,1212.4 396.5,1203.0 397.5,1213.4 398.5,1206.7 399.5,1218.8 400.5,1204.6 401.5,1211.4 402.5,1224.8 403.5,1228.3 404.5,1211.9 405.5,1210.8 406.5,1225.0 407.5,1225.4 408.5,1215.4 409.5,1217.5 410.5,1218.1 411.5,1216.2 412.5,1219.4 413.5,1231.9 414.5,1228.7 415.5,1238.6 416.5,1224.1 417.5,1222.9 418.5,1217.8 419.5,1221.1 420.5,1214.3 421.5,1211.0 422.5,1223.7 423.5,1227.8 424.5,1222.8 425.5,1225.2 426.5,1217.0 427.5,1210.7 428.5,1214.0 429.5,1210.6 430.5,1206.6 431.5,1204.0 432.5,1205.3 433.5,1213.0 434.5,1214.4 435.5,1211.3 436.5,1223.6 437.5,1215.5 438.5,1218.5 439.5,1223.1 440.5,1211.0 441.5,1205.6 442.5,1220.8 443.5,1212.6 444.5,1225.2 445.5,1218.9 446.5,1223.7 447.5,1222.4 448.5,1207.1 449.5,1222.7 450.5,1214.9 451.5,1215.1 452.5,1217.2 453.5,1225.1 454.5,1226.5 455.5,1227.9 456.5,1213.3 457.5,1219.2 458.5,1211.8 459.5,1222.8 460.5,1227.9 461.5,1220.6 462.5,1226.7 463.5,1227.1 464.5,1232.9 465.5,1222.6 466.5,1223.1 467.5,1224.0 468.5,1240.2 469.5,1236.3 470.5,1228.9 471.5,1231.6 472.5,1231.4 473.5,1232.5 474.5,1230.7 475.5,1229.8 476.5,1224.0 477.5,1226.0 478.5,1239.2 479.5,1230.5 480.5,1226.2 481.5,1223.6 482.5,1223.9 483.5,1224.8 484.5,1218.0 485.5,1221.4 486.5,1220.6 487.5,1214.1 488.5,1212.8 489.5,1210.6 490.5,1209.7 491.5,1221.0 492.5,1204.0 493.5,1213.7 494.5,1211.9 495.5,1211.9 496.5,1215.7 497.5,1222.6 498.5,1215.5 499.5,1214.3 500.5,1211.9 501.5,1214.4 502.5,1221.2 503.5,1213.0 504.5,1209.3 505.5,1208.7 506.5,1209.5 507.5,1208.1 508.5,1222.4 509.5,1217.4 510.5,1213.8 511.5,1224.9 512.5,1211.7 513.5,1220.1 514.5,1220.4 515.5,1207.3 516.5,1207.2 517.5,1210.4 518.5,1221.1 519.5,1223.7 520.5,1208.9 521.5,1222.1 522.5,1213.1 523.5,1213.0 524.5,1212.2 525.5,1213.4 526.5,1205.9 527.5,1209.5 528.5,1207.3 529.5,1215.8 530.5,1225.6 531.5,1226.5 532.5,1207.8 533.5,1199.9 534.5,1205.5 535.5,1201.8 536.5,1218.9 537.5,1208.4 538.5,1199.9 539.5,1208.8 540.5,1205.1 541.5,1193.7 542.5,1200.7 543.5,1203.7 544.5,1206.6 545.5,1209.0 546.5,1207.9 547.5,1212.5 548.5,1209.9 549.5,1209.9 550.5,1226.2 551.5,1219.9 552.5,1222.0 553.5,1212.7 554.5,1221.4 555.5,1229.0 556.5,1218.1 557.5,1233.0 558.5,1224.7 559.5,1230.4 560.5,1228.0 561.5,1231.2 562.5,1238.9 563.5,1229.8 564.5,1243.4 565.5,1230.0 566.5,1230.3 567.5,1240.8 568.5,1231.7 569.5,1234.8 570.5,1242.4 571.5,1244.1 572.5,1226.7 573.5,1238.6 574.5,1247.5 575.5,1242.5 576.5,1232.9 577.5,1230.7 578.5,1231.9 579.5,1227.2 580.5,1231.3 581.5,1231.3 582.5,1231.2 583.5,1239.5 584.5,1230.0 585.5,1223.5 586.5,1237.5 587.5,1224.7 588.5,1227.5 589.5,1228.7 590.5,1227.3 591.5,1226.3 592.5,1232.4 593.5,1250.7 594.5,1235.2 595.5,1239.9 596.5,1250.5 597.5,1250.2 598.5,1252.7 599.5,1253.9 600.5,1238.4 601.5,1244.0 602.5,1249.3 603.5,1252.0 604.5,1257.4 605.5,1252.0 606.5,1247.8 607.5,1249.3 608.5,1248.1 609.5,1251.0 610.5,1254.0 611.5,1247.9 612.5,1245.6 613.5,1245.5 614.5,1257.3 615.5,1257.7 616.5,1253.8 617.5,1251.0 618.5,1248.9 619.5,1241.3 620.5,1243.9 621.5,1232.2 622.5,1234.5 623.5,1229.9 624.5,1236.6 625.5,1226.9 626.5,1227.3 627.5,1228.6 628.5,1233.1 629.5,1219.7 630.5,1220.4 631.5,1232.0 632.5,1222.3 633.5,1232.2 634.5,1227.7 635.5,1231.4 636.5,1224.2 637.5,1239.5 638.5,1233.6 639.5,1232.9 640.5,1252.8 641.5,1245.0 642.5,1257.6 643.5,1245.7 644.5,1242.6 645.5,1245.1 646.5,1253.9 647.5,1241.7 648.5,1243.6 649.5,1242.8 650.5,1233.5 651.5,1237.6 652.5,1233.0 653.5,1228.0 654.5,1238.8 655.5,1236.2 656.5,1230.9 657.5,1224.6 658.5,1219.8 659.5,1234.0 660.5,1231.2 661.5,1224.2 662.5,1233.3 663.5,1226.9 664.5,1235.3 665.5,1237.3 666.5,1239.7 667.5,1239.7 668.5,1240.3 669.5,1234.4 670.5,1239.1 671.5,1239.4 672.5,1241.7 673.5,1245.6 674.5,1248.9 675.5,1256.7 676.5,1235.6 677.5,1250.2 678.5,1246.2 679.5,1261.0 680.5,1250.4 681.5,1234.3 682.5,1243.8 683.5,1236.9 684.5,1244.7 685.5,1231.1 686.5,1234.4 687.5,1232.7 688.5,1231.3 689.5,1228.5 690.5,1223.0 691.5,1236.0 692.5,1240.4 693.5,1234.1 694.5,1230.2 695.5,1237.4 696.5,1240.6 697.5,1236.7 698.5,1238.3 699.5,1248.6 700.5,1234.3 701.5,1237.9 702.5,1231.9 703.5,1238.7 704.5,1239.3 705.5,1238.9 706.5,1241.1 707.5,1257.4 708.5,1245.1 709.5,1246.3 710.5,1262.5 711.5,1247.4 712.5,1238.6 713.5,1249.5 714.5,1241.6 715.5,1256.8 716.5,1239.0 717.5,1241.8 718.5,1236.2 719.5,1244.4 720.5,1238.2 721.5,1242.4 722.5,1240.4 723.5,1238.7 724.5,1247.6 725.5,1247.1 726.5,1240.7 727.5,1235.2 728.5,1233.9 729.5,1240.6 730.5,1254.2 731.5,1235.5 732.5,1233.3 733.5,1234.5 734.5,1234.5 735.5,1237.1 736.5,1243.0 737.5,1255.7 738.5,1248.0 739.5,1247.4 740.5,1243.9 741.5,1255.4 742.5,1255.9 743.5,1251.9 744.5,1251.0 745.5,1251.2 746.5,1253.1 747.5,1245.4 748.5,1237.5 749.5,1229.4 750.5,1234.1 751.5,1232.8 752.5,1248.5 753.5,1229.1 754.5,1233.8 755.5,1245.1 756.5,1236.2 757.5,1248.1 758.5,1239.2 759.5,1241.3 760.5,1239.4 761.5,1235.3 762.5,1238.2 763.5,1259.0 764.5,1249.3 765.5,1250.0 766.5,1253.3 767.5,1251.6 768.5,1255.6 769.5,1248.3 770.5,1249.4 771.5,1258.1 772.5,1250.6 773.5,1246.7 774.5,1253.1 775.5,1252.5 776.5,1260.3 777.5,1253.4 778.5,1252.7 779.5,1257.2 780.5,1268.9 781.5,1257.6 782.5,1258.2 783.5,1256.6 784.5,1257.9 785.5,1261.5 786.5,1264.0 787.5,1245.8 788.5,1262.5 789.5,1252.7 790.5,1250.5 791.5,1267.4 792.5,1249.9 793.5,1263.3 794.5,1256.1 795.5,1243.7 796.5,1251.5 797.5,1252.6 798.5,1246.3 799.5,1235.3 800.5,1244.0 801.5,1244.1 802.5,1239.8 803.5,1258.1 804.5,1244.9 805.5,1244.6 806.5,1245.5 807.5,1243.5 808.5,1243.9 809.5,1248.8 810.5,1250.7 811.5,1246.4 812.5,1248.9 813.5,1242.8 814.5,1253.7 815.5,1246.8 816.5,1252.4 817.5,1246.8 818.5,1249.2 819.5,1253.6 820.5,1246.5 821.5,1269.0 822.5,1253.2 823.5,1253.4 824.5,1250.5 825.5,1265.4 826.5,1264.4 827.5,1257.4 828.5,1249.0 829.5,1253.6 830.5,1260.6 831.5,1254.2 832.5,1251.1 833.5,1251.4 834.5,1253.8 835.5,1258.0 836.5,1255.0 837.5,1258.6 838.5,1274.8 839.5,1271.1 840.5,1254.2 841.5,1262.0 842.5,1260.6 843.5,1259.6 844.5,1267.6 845.5,1259.2 846.5,1259.6 847.5,1259.6 848.5,1261.3 849.5,1270.8 850.5,1267.6 851.5,1256.0 852.5,1260.8 853.5,1259.3 854.5,1269.1 855.5,1265.4 856.5,1269.7 857.5,1262.9 858.5,1253.1 859.5,1265.2 860.5,1263.2 861.5,1264.5 862.5,1254.1 863.5,1260.6 864.5,1256.1 865.5,1255.6 866.5,1260.8 867.5,1260.3 868.5,1252.9 869.5,1248.3 870.5,1245.3 871.5,1252.9 872.5,1262.9 873.5,1254.5 874.5,1243.2 875.5,1249.4 876.5,1256.0 877.5,1263.9 878.5,1260.0 879.5,1254.1 880.5,1252.4 881.5,1245.2 882.5,1247.8 883.5,1247.8 884.5,1245.1 885.5,1248.9 886.5,1245.9 887.5,1249.7 888.5,1256.5 889.5,1251.3 890.5,1248.6 891.5,1244.1 892.5,1238.2 893.5,1246.9 894.5,1252.7 895.5,1245.6 896.5,1260.8 897.5,1252.3 898.5,1258.1 899.5,1255.5 900.5,1251.8 901.5,1272.1 902.5,1252.5 903.5,1264.6 904.5,1255.8 905.5,1260.5 906.5,1254.7 907.5,1256.8 908.5,1265.2 909.5,1272.3 910.5,1255.0 911.5,1259.4 912.5,1265.9 913.5,1256.4 914.5,1264.5 915.5,1255.9 916.5,1264.0 917.5,1262.3 918.5,1266.2 919.5,1259.1 920.5,1249.4 921.5,1258.5 922.5,1247.2 923.5,1256.4 924.5,1260.2 925.5,1252.7 926.5,1244.6 927.5,1254.0 928.5,1245.8 929.5,1236.7 930.5,1239.0 931.5,1248.1 932.5,1234.8 933.5,1235.0 934.5,1232.0 936.0,1166.0 937.2,1118.0 938.2,1197.0 939.0,1248.0 940.5,1250.7 941.5,1247.0 942.5,1250.8 943.5,1252.5 944.5,1248.3 945.5,1242.8 946.5,1234.3 947.5,1259.2 948.5,1261.9 949.5,1269.9 950.5,1271.8 951.5,1254.8 952.5,1248.0 953.5,1252.3 954.5,1265.9 955.5,1250.6 956.5,1262.3 957.5,1264.2 958.5,1273.6 959.5,1279.4 960.5,1267.7 961.5,1262.7 962.5,1268.9 963.5,1266.8 964.5,1260.2 965.5,1273.6 966.5,1264.7 967.5,1271.6 968.5,1260.1 969.5,1273.7 970.5,1258.8 971.5,1272.9 972.5,1256.5 973.5,1274.6 974.5,1263.2 975.5,1257.0 976.5,1263.4 977.5,1266.6 978.5,1259.1 979.5,1259.2 980.5,1260.7 981.5,1255.2 982.5,1242.1 983.5,1248.1 984.5,1250.3 985.5,1248.5 986.5,1254.3 987.5,1245.0 988.5,1265.5 989.5,1255.9 990.5,1253.6 991.5,1260.4 992.5,1261.8 993.5,1258.3 994.5,1256.8 995.5,1269.0 996.5,1267.2 997.5,1257.2 998.5,1263.4 999.5,1273.6 1000.5,1272.0 1001.5,1273.9 1002.5,1277.2 1003.5,1274.7 1004.5,1285.2 1005.5,1272.4 1006.5,1274.2 1007.5,1279.2 1008.5,1281.2 1009.5,1280.6 1010.5,1284.4 1011.5,1271.1 1012.5,1280.5 1013.5,1274.9 1014.5,1265.6 1015.5,1269.3 1016.5,1283.2 1017.5,1273.5 1018.5,1265.0 1019.5,1255.4 1020.5,1261.9 1021.5,1261.2 1022.5,1264.3 1023.5,1278.5 1024.5,1267.1 1025.5,1263.3 1026.5,1255.6 1027.5,1253.5 1028.5,1258.6 1029.5,1258.6 1030.5,1278.2 1031.5,1261.5 1032.5,1261.8 1033.5,1273.8 1034.5,1268.0 1035.5,1262.6 1036.5,1278.8 1037.5,1269.8 1038.5,1266.1 1039.5,1276.5 1040.5,1279.2 1041.5,1275.8 1042.5,1283.7 1043.5,1286.1 1044.5,1277.7 1045.5,1273.4 1046.5,1274.3 1047.5,1286.2 1048.5,1294.5 1049.5,1292.1 1050.5,1293.9 1051.5,1296.1 1052.5,1282.8 1053.5,1289.0 1054.5,1273.3 1055.5,1284.7 1056.5,1281.8 1057.5,1277.8 1058.5,1275.2 1059.5,1270.8 1060.5,1276.0 1061.5,1282.4 1062.5,1270.6 1063.5,1274.7 1064.5,1266.5 1065.5,1270.3 1066.5,1262.2 1067.5,1268.5 1068.5,1263.6 1069.5,1265.9 1070.5,1260.4 1071.5,1257.2 1072.5,1261.1 1073.5,1269.3 1074.5,1272.6 1075.5,1260.0 1076.5,1266.6 1077.5,1266.0 1078.5,1263.1 1079.5,1252.4 1080.5,1261.9 1081.5,1254.5 1082.5,1266.9 1083.5,1266.8 1084.5,1268.2 1085.5,1255.6 1086.5,1273.3 1087.5,1276.4 1088.5,1267.8 1089.5,1283.2 1090.5,1279.7 1091.5,1280.8 1092.5,1279.8 1093.5,1278.9 1094.5,1282.5 1095.5,1301.3 1096.5,1287.4 1097.5,1288.1 1098.5,1284.1 1099.5,1284.9 1100.5,1285.9 1101.5,1284.9 1102.5,1295.9 1103.5,1289.3 1104.5,1295.3 1105.5,1280.5 1106.5,1289.5 1107.5,1279.9 1108.5,1281.4 1109.5,1273.3 1110.5,1266.2 1111.5,1275.7 1112.5,1264.1 1113.5,1266.2 1114.5,1263.1 1115.5,1269.5 1116.5,1266.8 1117.5,1271.2 1118.5,1272.2 1119.5,1267.1 1120.5,1264.0 1121.5,1274.6 1122.5,1278.5 1123.5,1277.6 1124.5,1267.8 1125.5,1278.2 1126.5,1277.3 1127.5,1277.4 1128.5,1279.2 1129.5,1275.6 1130.5,1279.6 1131.5,1285.3 1132.5,1277.4 1133.5,1273.6 1134.5,1281.1 1135.5,1283.9 1136.5,1274.2 1137.5,1281.0 1138.5,1289.2 1139.5,1285.4 1140.5,1287.6 1141.5,1281.6 1142.5,1294.9 1143.5,1301.5 1144.5,1289.6 1145.5,1287.0 1146.5,1284.1 1147.5,1295.2 1148.5,1289.1 1149.5,1283.7 1150.5,1295.2 1151.5,1291.4 1152.5,1289.6 1153.5,1276.0 1154.5,1283.5 1155.5,1287.5 1156.5,1276.4 1157.5,1288.1 1158.5,1290.8 1159.5,1287.3 1160.5,1275.9 1161.5,1274.9 1162.5,1283.8 1163.5,1283.1 1164.5,1283.6 1165.5,1282.4 1166.5,1272.8 1167.5,1270.2 1168.5,1261.9 1169.5,1275.5 1170.5,1284.5 1171.5,1265.8 1172.5,1265.4 1173.5,1272.4 1174.5,1270.8 1175.5,1261.7 1176.5,1265.3 1177.5,1263.7 1178.5,1283.1 1179.5,1266.1 1180.5,1275.8 1181.5,1283.2 1182.5,1283.3 1183.5,1280.5 1184.5,1282.1 1185.5,1265.2 1186.5,1269.9 1187.5,1269.1 1188.5,1272.4 1189.5,1291.0 1190.5,1267.8 1191.5,1281.1 1192.5,1272.3 1193.5,1288.7 1194.5,1289.6 1195.5,1279.4 1196.5,1297.1 1197.5,1284.8 1198.5,1294.2 1199.5,1287.7 1200.5,1281.9 1201.5,1282.0 1202.5,1282.4 1203.5,1286.3 1204.5,1282.2 1205.5,1296.4 1206.5,1278.7 1207.5,1276.4 1208.5,1274.3 1209.5,1273.2 1210.5,1269.0 1211.5,1270.4 1212.5,1280.5 1213.5,1273.8 1214.5,1271.5 1215.5,1273.8 1216.5,1277.7 1217.5,1273.6 1218.5,1273.7 1219.5,1264.7 1220.5,1265.3 1221.5,1261.7 1222.5,1264.9 1223.5,1261.2 1224.5,1263.2 1225.5,1264.0 1226.5,1263.7 1227.5,1263.2 1228.5,1261.9 1229.5,1273.1 1230.5,1262.4 1231.5,1258.8 1232.5,1265.0 1233.5,1258.1 1234.5,1259.5 1235.5,1267.5 1236.5,1260.6 1237.5,1259.9 1238.5,1274.9 1239.5,1282.0 1240.5,1268.6 1241.5,1274.5 1242.5,1283.5 1243.5,1268.8 1244.5,1273.6 1245.5,1271.1 1246.5,1275.3 1247.5,1265.6 1248.5,1280.6 1249.5,1273.1 1250.5,1275.0 1251.5,1270.5 1252.5,1261.8 1253.5,1273.1 1254.5,1268.7 1255.5,1276.9 1256.5,1274.0 1257.5,1278.2 1258.5,1280.2 1259.5,1287.9 1260.5,1289.0 1261.5,1276.7 1262.5,1279.5 1263.5,1287.4 1264.5,1278.8 1265.5,1269.7 1266.5,1270.7 1267.5,1267.4 1268.5,1273.4 1269.5,1265.2 1270.5,1265.4 1271.5,1278.7 1272.5,1258.5 1273.5,1261.9 1274.5,1259.9 1275.5,1262.1 1276.5,1277.5 1277.5,1275.3 1278.5,1285.9 1279.5,1266.6 1280.5,1273.6 1281.5,1289.4 1282.5,1288.2 1283.5,1288.5 1284.5,1289.4 1285.5,1284.7 1286.5,1285.4 1287.5,1286.7 1288.5,1293.2 1289.5,1287.7 1290.5,1291.7 1291.5,1299.4 1292.5,1283.2 1293.5,1284.2 1294.5,1291.0 1295.5,1285.1 1296.5,1284.8 1297.5,1298.9 1298.5,1286.8 1299.5,1281.1 1300.5,1289.8 1301.5,1297.5 1302.5,1275.2 1303.5,1276.6 1304.5,1280.5 1305.5,1276.3 1306.5,1293.9 1307.5,1282.5 1308.5,1276.7 1309.5,1281.7 1310.5,1274.2 1311.5,1274.9 1312.5,1278.4 1313.5,1293.4 1314.5,1266.2 1315.5,1279.7 1316.5,1285.8 1317.5,1281.4 1318.5,1289.1 1319.5,1278.9 1320.5,1276.7 1321.5,1275.0 1322.5,1271.3 1323.5,1286.6 1324.5,1269.6 1325.5,1274.8 1326.5,1272.7 1327.5,1271.3 1328.5,1264.2 1329.5,1273.2 1330.5,1276.0 1331.5,1275.9 1332.5,1280.6 1333.5,1274.0 1334.5,1272.2 1335.5,1278.7 1336.5,1282.3 1337.5,1274.4 1338.5,1272.5 1339.5,1276.2 1340.5,1289.6 1341.5,1290.4 1342.5,1280.5 1343.5,1286.8 1344.5,1292.9 1345.5,1297.4 1346.5,1286.3 1347.5,1289.6 1348.5,1301.5 1349.5,1304.7 1350.5,1295.8 1351.5,1276.5 1352.5,1281.9 1353.5,1274.1 1354.5,1272.1 1355.5,1269.3 1356.5,1271.5 1357.5,1275.0 1358.5,1288.4 1359.5,1282.2 1360.5,1281.5 1361.5,1280.0 1362.5,1277.3 1363.5,1281.1 1364.5,1291.8 1365.5,1289.1 1366.5,1295.7 1367.5,1283.2 1368.5,1280.3 1369.5,1271.3 1370.5,1281.0 1371.5,1268.7 1372.5,1286.6 1373.5,1272.1 1374.5,1274.3 1375.5,1266.5 1376.5,1269.7 1377.5,1267.5 1378.5,1280.8 1379.5,1275.8 1380.5,1269.2 1381.5,1266.5 1382.5,1276.7 1383.5,1275.6 1384.5,1273.5 1385.5,1284.0 1386.5,1280.1 1387.5,1282.7 1388.5,1280.0 1389.5,1281.1 1390.5,1282.6 1391.5,1277.9 1392.5,1289.5 1393.5,1287.1 1394.5,1275.0 1395.5,1283.5 1396.5,1289.7 1397.5,1282.7 1398.5,1289.0 1399.5,1278.1 1400.5,1278.6 1401.5,1271.3 1402.5,1272.4 1403.5,1267.0 1404.5,1270.6 1405.5,1275.5 1406.5,1276.1 1407.5,1279.3 1408.5,1271.1 1409.5,1264.0 1410.5,1270.7 1411.5,1265.8 1412.5,1277.4 1413.5,1277.3 1414.5,1271.0 1415.5,1261.0 1416.5,1266.2 1417.5,1272.3 1418.5,1269.6 1419.5,1278.8 1420.5,1282.0 1421.5,1285.2 1422.5,1283.2 1423.5,1279.4 1424.5,1281.7 1425.5,1287.5 1426.5,1298.8 1427.5,1299.2 1428.5,1293.8 1429.5,1288.3 1430.5,1289.1 1431.5,1288.7 1432.5,1290.5 1433.5,1286.3 1434.5,1271.5 1435.5,1286.1 1436.5,1283.1 1437.5,1278.9 1438.5,1285.5" stroke="#e224a6"/>
<polyline points="220.5,1300.0 221.3,1277.0 222.5,1194.0 223.5,1208.4 224.5,1185.3 225.5,1192.3 226.5,1187.1 227.5,1182.4 228.5,1184.8 229.5,1186.0 230.5,1189.3 231.5,1193.6 232.5,1199.1 233.5,1194.2 234.5,1201.6 235.5,1197.7 236.5,1196.1 237.5,1195.2 238.5,1192.1 239.5,1189.8 240.5,1198.3 241.5,1197.8 242.5,1200.9 243.5,1201.0 244.5,1192.0 245.5,1194.9 246.5,1192.7 247.5,1205.8 248.5,1198.1 249.5,1199.4 250.5,1193.8 251.5,1191.9 252.5,1195.1 253.5,1196.8 254.5,1199.6 255.5,1187.5 256.5,1196.9 257.5,1189.2 258.5,1190.1 259.5,1190.3 260.5,1189.7 261.5,1196.0 262.5,1199.9 263.5,1196.9 264.5,1192.5 265.5,1199.1 266.5,1199.6 267.5,1203.9 268.5,1200.5 269.5,1190.9 270.5,1196.3 271.5,1199.1 272.5,1208.5 273.5,1202.1 274.5,1210.1 275.5,1206.5 276.5,1199.0 277.5,1206.4 278.5,1210.7 279.5,1210.0 280.5,1199.7 281.5,1210.9 282.5,1205.3 283.5,1197.6 284.5,1206.2 285.5,1199.1 286.5,1203.2 287.5,1220.6 288.5,1228.4 289.5,1218.7 290.5,1214.6 291.5,1224.9 292.5,1213.6 293.5,1205.8 294.5,1199.3 295.5,1217.0 296.5,1198.9 297.5,1198.7 298.5,1206.5 299.5,1210.1 300.5,1205.0 301.5,1216.8 302.5,1208.7 303.5,1210.4 304.5,1211.9 305.5,1205.5 306.5,1209.8 307.5,1224.9 308.5,1203.0 309.5,1208.9 310.5,1211.3 311.5,1204.5 312.5,1206.9 313.5,1197.8 314.5,1204.4 315.5,1207.1 316.5,1215.4 317.5,1214.7 318.5,1205.4 319.5,1203.0 320.5,1222.7 321.5,1216.4 322.5,1200.3 323.5,1209.2 324.5,1206.7 325.5,1208.8 326.5,1203.4 327.5,1210.8 328.5,1210.8 329.5,1212.8 330.5,1222.1 331.5,1216.7 332.5,1209.1 333.5,1206.8 334.5,1213.8 335.5,1225.5 336.5,1224.5 337.5,1215.1 338.5,1227.1 339.5,1221.5 340.5,1214.8 341.5,1220.7 342.5,1216.9 343.5,1210.9 344.5,1214.3 345.5,1217.3 346.5,1225.4 347.5,1209.9 348.5,1216.8 349.5,1214.9 350.5,1214.2 351.5,1207.5 352.5,1222.8 353.5,1222.8 354.5,1224.6 355.5,1216.0 356.5,1223.0 357.5,1215.8 358.5,1218.8 359.5,1209.4 360.5,1212.4 361.5,1208.7 362.5,1204.4 363.5,1207.4 364.5,1203.3 365.5,1203.0 366.5,1206.8 367.5,1205.7 368.5,1224.1 369.5,1222.0 370.5,1217.0 371.5,1214.9 372.5,1204.6 373.5,1211.3 374.5,1201.5 375.5,1206.0 376.5,1206.9 377.5,1207.6 378.5,1215.9 379.5,1205.4 380.5,1227.1 381.5,1207.0 382.5,1216.0 383.5,1201.3 384.5,1216.6 385.5,1203.4 386.5,1211.5 387.5,1210.1 388.5,1216.2 389.5,1214.7 390.5,1213.2 391.5,1209.6 392.5,1224.8 393.5,1208.0 394.5,1210.6 395.5,1208.1 396.5,1211.7 397.5,1205.5 398.5,1208.6 399.5,1214.5 400.5,1207.8 401.5,1214.4 402.5,1207.9 403.5,1221.5 404.5,1210.4 405.5,1224.1 406.5,1214.9 407.5,1210.6 408.5,1218.3 409.5,1220.0 410.5,1222.7 411.5,1221.8 412.5,1218.2 413.5,1205.4 414.5,1218.6 415.5,1211.3 416.5,1214.8 417.5,1221.2 418.5,1208.1 419.5,1221.8 420.5,1229.4 421.5,1216.1 422.5,1210.4 423.5,1222.2 424.5,1213.5 425.5,1220.0 426.5,1221.5 427.5,1204.1 428.5,1214.7 429.5,1204.1 430.5,1208.6 431.5,1216.9 432.5,1206.0 433.5,1208.7 434.5,1210.1 435.5,1214.9 436.5,1215.2 437.5,1215.9 438.5,1210.0 439.5,1208.7 440.5,1215.8 441.5,1208.2 442.5,1208.5 443.5,1218.0 444.5,1208.7 445.5,1208.1 446.5,1221.3 447.5,1212.9 448.5,1201.4 449.5,1209.1 450.5,1227.5 451.5,1230.7 452.5,1211.7 453.5,1218.4 454.5,1218.7 455.5,1215.7 456.5,1203.6 457.5,1220.8 458.5,1215.5 459.5,1212.3 460.5,1204.8 461.5,1210.2 462.5,1213.1 463.5,1212.4 464.5,1215.4 465.5,1211.8 466.5,1221.2 467.5,1218.6 468.5,1207.9 469.5,1211.0 470.5,1217.4 471.5,1211.5 472.5,1224.8 473.5,1211.8 474.5,1216.6 475.5,1219.4 476.5,1209.0 477.5,1224.3 478.5,1214.2 479.5,1211.6 480.5,1211.8 481.5,1206.5 482.5,1208.4 483.5,1226.8 484.5,1215.3 485.5,1214.6 486.5,1217.6 487.5,1220.5 488.5,1212.1 489.5,1215.4 490.5,1218.6 491.5,1224.1 492.5,1218.7 493.5,1229.1 494.5,1216.0 495.5,1215.4 496.5,1209.8 497.5,1217.2 498.5,1222.2 499.5,1216.4 500.5,1216.6 501.5,1211.9 502.5,1213.6 503.5,1213.9 504.5,1215.4 505.5,1223.3 506.5,1218.8 507.5,1221.3 508.5,1222.8 509.5,1211.4 510.5,1223.2 511.5,1213.3 512.5,1205.5 513.5,1209.0 514.5,1211.4 515.5,1203.1 516.5,1227.8 517.5,1210.4 518.5,1216.4 519.5,1203.3 520.5,1210.0 521.5,1210.8 522.5,1204.5 523.5,1209.9 524.5,1207.8 525.5,1210.0 526.5,1200.4 527.5,1210.0 528.5,1203.9 529.5,1199.9 530.5,1192.0 531.5,1201.7 532.5,1199.8 533.5,1218.2 534.5,1193.6 535.5,1210.0 536.5,1207.3 537.5,1200.3 538.5,1198.2 539.5,1199.2 540.5,1186.8 541.5,1204.8 542.5,1193.3 543.5,1191.5 544.5,1196.0 545.5,1184.9 546.5,1189.8 547.5,1191.1 548.5,1189.5 549.5,1202.6 550.5,1210.5 551.5,1199.5 552.5,1198.1 553.5,1202.6 554.5,1198.1 555.5,1202.0 556.5,1204.0 557.5,1200.0 558.5,1199.1 559.5,1201.8 560.5,1201.8 561.5,1206.4 562.5,1193.5 563.5,1195.7 564.5,1199.1 565.5,1205.3 566.5,1194.9 567.5,1210.7 568.5,1212.4 569.5,1198.1 570.5,1210.2 571.5,1191.0 572.5,1201.8 573.5,1193.7 574.5,1210.2 575.5,1208.6 576.5,1206.2 577.5,1199.5 578.5,1196.6 579.5,1205.7 580.5,1200.1 581.5,1207.7 582.5,1194.4 583.5,1206.0 584.5,1206.7 585.5,1191.8 586.5,1196.4 587.5,1199.5 588.5,1200.2 589.5,1194.1 590.5,1203.6 591.5,1197.5 592.5,1203.3 593.5,1193.8 594.5,1197.4 595.5,1208.8 596.5,1194.7 597.5,1203.8 598.5,1214.5 599.5,1209.9 600.5,1197.1 601.5,1220.3 602.5,1201.4 603.5,1211.1 604.5,1211.3 605.5,1202.9 606.5,1209.1 607.5,1193.4 608.5,1205.3 609.5,1205.8 610.5,1202.8 611.5,1204.8 612.5,1211.2 613.5,1209.7 614.5,1199.2 615.5,1207.6 616.5,1209.9 617.5,1201.6 618.5,1203.1 619.5,1188.7 620.5,1190.9 621.5,1201.4 622.5,1190.3 623.5,1204.0 624.5,1206.1 625.5,1192.3 626.5,1191.1 627.5,1196.2 628.5,1198.5 629.5,1202.6 630.5,1195.4 631.5,1196.7 632.5,1190.9 633.5,1197.9 634.5,1191.7 635.5,1202.8 636.5,1200.4 637.5,1186.5 638.5,1197.4 639.5,1189.0 640.5,1201.6 641.5,1189.0 642.5,1203.4 643.5,1201.7 644.5,1208.0 645.5,1196.0 646.5,1193.9 647.5,1202.1 648.5,1186.7 649.5,1192.9 650.5,1191.2 651.5,1192.4 652.5,1184.0 653.5,1183.2 654.5,1183.2 655.5,1203.1 656.5,1190.9 657.5,1197.2 658.5,1192.4 659.5,1191.9 660.5,1202.6 661.5,1182.3 662.5,1192.4 663.5,1189.5 664.5,1189.0 665.5,1185.4 666.5,1185.9 667.5,1187.9 668.5,1202.2 669.5,1190.9 670.5,1192.3 671.5,1194.0 672.5,1199.4 673.5,1202.5 674.5,1196.6 675.5,1195.6 676.5,1199.3 677.5,1191.6 678.5,1197.3 679.5,1208.2 680.5,1192.8 681.5,1191.8 682.5,1188.3 683.5,1197.0 684.5,1201.2 685.5,1194.7 686.5,1195.4 687.5,1205.7 688.5,1197.6 689.5,1202.5 690.5,1195.8 691.5,1207.1 692.5,1204.4 693.5,1197.3 694.5,1194.9 695.5,1216.2 696.5,1192.5 697.5,1193.1 698.5,1187.1 699.5,1203.2 700.5,1198.8 701.5,1198.1 702.5,1190.3 703.5,1198.7 704.5,1194.4 705.5,1192.4 706.5,1197.5 707.5,1200.9 708.5,1198.1 709.5,1196.2 710.5,1204.1 711.5,1200.6 712.5,1197.1 713.5,1203.1 714.5,1201.2 715.5,1205.7 716.5,1205.1 717.5,1204.5 718.5,1196.2 719.5,1208.8 720.5,1206.5 721.5,1196.7 722.5,1208.4 723.5,1200.2 724.5,1194.3 725.5,1199.6 726.5,1192.9 727.5,1207.8 728.5,1193.1 729.5,1210.4 730.5,1195.4 731.5,1199.4 732.5,1209.2 733.5,1202.5 734.5,1191.4 735.5,1199.6 736.5,1190.6 737.5,1205.0 738.5,1195.0 739.5,1200.0 740.5,1199.8 741.5,1192.5 742.5,1202.8 743.5,1213.3 744.5,1195.9 745.5,1197.7 746.5,1203.3 747.5,1209.3 748.5,1195.9 749.5,1201.6 750.5,1202.6 751.5,1207.4 752.5,1195.4 753.5,1217.2 754.5,1213.9 755.5,1191.9 756.5,1194.8 757.5,1201.2 758.5,1195.2 759.5,1195.6 760.5,1198.2 761.5,1194.1 762.5,1194.6 763.5,1199.0 764.5,1195.3 765.5,1199.7 766.5,1204.4 767.5,1204.7 768.5,1197.2 769.5,1211.1 770.5,1194.2 771.5,1202.4 772.5,1208.8 773.5,1196.9 774.5,1201.4 775.5,1193.3 776.5,1192.9 777.5,1197.4 778.5,1199.5 779.5,1198.8 780.5,1201.1 781.5,1198.7 782.5,1196.2 783.5,1193.6 784.5,1196.4 785.5,1197.3 786.5,1197.1 787.5,1191.6 788.5,1206.4 789.5,1205.3 790.5,1199.3 791.5,1195.3 792.5,1205.7 793.5,1196.9 794.5,1196.9 795.5,1202.5 796.5,1195.6 797.5,1199.4 798.5,1196.2 799.5,1203.1 800.5,1201.9 801.5,1204.2 802.5,1202.3 803.5,1201.6 804.5,1202.2 805.5,1205.2 806.5,1194.7 807.5,1193.7 808.5,1200.5 809.5,1201.2 810.5,1199.0 811.5,1211.0 812.5,1203.8 813.5,1209.5 814.5,1201.4 815.5,1193.7 816.5,1193.8 817.5,1208.8 818.5,1201.5 819.5,1198.9 820.5,1210.6 821.5,1213.8 822.5,1204.5 823.5,1211.0 824.5,1200.4 825.5,1197.2 826.5,1193.6 827.5,1210.1 828.5,1194.4 829.5,1200.5 830.5,1203.1 831.5,1206.7 832.5,1192.8 833.5,1201.4 834.5,1198.3 835.5,1212.9 836.5,1201.6 837.5,1199.2 838.5,1214.6 839.5,1203.7 840.5,1208.1 841.5,1204.8 842.5,1201.8 843.5,1207.8 844.5,1198.8 845.5,1195.4 846.5,1199.2 847.5,1207.0 848.5,1200.6 849.5,1210.1 850.5,1207.6 851.5,1204.0 852.5,1210.4 853.5,1205.2 854.5,1204.8 855.5,1201.2 856.5,1202.1 857.5,1202.2 858.5,1210.0 859.5,1213.7 860.5,1210.2 861.5,1204.3 862.5,1202.0 863.5,1204.4 864.5,1199.7 865.5,1202.6 866.5,1200.9 867.5,1202.4 868.5,1190.9 869.5,1202.6 870.5,1207.2 871.5,1197.0 872.5,1215.0 873.5,1203.6 874.5,1199.7 875.5,1212.5 876.5,1197.7 877.5,1220.1 878.5,1198.9 879.5,1209.2 880.5,1212.7 881.5,1207.7 882.5,1203.8 883.5,1199.3 884.5,1202.4 885.5,1204.7 886.5,1210.2 887.5,1191.9 888.5,1207.8 889.5,1197.8 890.5,1200.5 891.5,1203.3 892.5,1200.7 893.5,1208.2 894.5,1195.6 895.5,1207.5 896.5,1199.1 897.5,1202.5 898.5,1204.1 899.5,1197.3 900.5,1207.6 901.5,1220.5 902.5,1203.0 903.5,1202.5 904.5,1218.5 905.5,1220.4 906.5,1198.9 907.5,1208.5 908.5,1207.0 909.5,1213.1 910.5,1212.3 911.5,1208.3 912.5,1212.1 913.5,1222.5 914.5,1209.9 915.5,1216.3 916.5,1219.2 917.5,1226.9 918.5,1217.7 919.5,1216.5 920.5,1209.9 921.5,1216.5 922.5,1224.2 923.5,1218.0 924.5,1223.4 925.5,1212.4 926.5,1220.3 927.5,1213.5 928.5,1211.2 929.5,1211.6 930.5,1223.2 931.5,1219.2 932.5,1217.3 933.5,1219.9 934.5,1229.9 935.5,1227.0 936.5,1248.6 937.5,1267.0 938.5,1273.6 939.5,1280.2 940.5,1275.2 941.5,1275.0 942.5,1277.7 943.5,1277.7 944.5,1278.2 945.5,1276.0 946.5,1276.2 947.5,1281.8 948.5,1272.5 949.5,1267.5 950.5,1291.0 951.5,1279.6 952.5,1280.0 953.5,1286.8 954.5,1286.5 955.5,1288.6 956.5,1285.0 957.5,1283.6 958.5,1281.5 959.5,1277.4 960.5,1277.3 961.5,1266.1 962.5,1289.3 963.5,1277.0 964.5,1272.3 965.5,1285.5 966.5,1273.6 967.5,1279.8 968.5,1272.6 969.5,1271.0 970.5,1284.7 971.5,1277.7 972.5,1268.5 973.5,1280.9 974.5,1282.2 975.5,1274.0 976.5,1280.0 977.5,1283.8 978.5,1282.5 979.5,1278.3 980.5,1278.9 981.5,1284.5 982.5,1274.2 983.5,1271.4 984.5,1271.7 985.5,1290.8 986.5,1268.4 987.5,1274.1 988.5,1264.7 989.5,1274.4 990.5,1274.0 991.5,1274.8 992.5,1281.0 993.5,1286.3 994.5,1277.7 995.5,1272.3 996.5,1274.1 997.5,1277.2 998.5,1273.6 999.5,1277.3 1000.5,1281.7 1001.5,1279.7 1002.5,1292.9 1003.5,1270.2 1004.5,1279.6 1005.5,1286.1 1006.5,1272.8 1007.5,1269.5 1008.5,1293.1 1009.5,1284.9 1010.5,1281.9 1011.5,1286.4 1012.5,1272.6 1013.5,1271.8 1014.5,1288.7 1015.5,1278.3 1016.5,1269.0 1017.5,1276.7 1018.5,1288.3 1019.5,1271.5 1020.5,1268.6 1021.5,1265.2 1022.5,1276.0 1023.5,1276.2 1024.5,1274.0 1025.5,1276.3 1026.5,1279.5 1027.5,1279.4 1028.5,1281.4 1029.5,1293.1 1030.5,1288.1 1031.5,1294.8 1032.5,1286.1 1033.5,1293.5 1034.5,1305.7 1035.5,1299.8 1036.5,1306.4 1037.5,1291.7 1038.5,1304.2 1039.5,1297.0 1040.5,1300.3 1041.5,1296.8 1042.5,1295.7 1043.5,1295.4 1044.5,1300.6 1045.5,1308.4 1046.5,1295.3 1047.5,1297.5 1048.5,1295.3 1049.5,1295.9 1050.5,1304.8 1051.5,1297.6 1052.5,1294.7 1053.5,1304.4 1054.5,1301.7 1055.5,1301.5 1056.5,1299.9 1057.5,1295.6 1058.5,1304.2 1059.5,1295.0 1060.5,1299.6 1061.5,1298.9 1062.5,1305.8 1063.5,1296.6 1064.5,1303.0 1065.5,1288.1 1066.5,1297.8 1067.5,1298.0 1068.5,1297.2 1069.5,1285.7 1070.5,1301.3 1071.5,1292.6 1072.5,1292.1 1073.5,1306.5 1074.5,1294.1 1075.5,1301.7 1076.5,1285.9 1077.5,1299.6 1078.5,1295.9 1079.5,1296.4 1080.5,1289.1 1081.5,1296.4 1082.5,1292.7 1083.5,1303.1 1084.5,1290.7 1085.5,1284.7 1086.5,1301.7 1087.5,1289.8 1088.5,1295.6 1089.5,1303.3 1090.5,1311.1 1091.5,1304.4 1092.5,1306.8 1093.5,1304.2 1094.5,1304.0 1095.5,1302.3 1096.5,1304.4 1097.5,1296.9 1098.5,1302.5 1099.5,1308.8 1100.5,1301.1 1101.5,1298.8 1102.5,1304.3 1103.5,1294.0 1104.5,1296.9 1105.5,1313.5 1106.5,1303.1 1107.5,1302.7 1108.5,1296.7 1109.5,1293.5 1110.5,1291.3 1111.5,1297.5 1112.5,1306.4 1113.5,1296.9 1114.5,1303.2 1115.5,1295.8 1116.5,1298.0 1117.5,1300.0 1118.5,1314.6 1119.5,1298.2 1120.5,1292.5 1121.5,1303.8 1122.5,1297.2 1123.5,1301.1 1124.5,1293.5 1125.5,1303.6 1126.5,1293.6 1127.5,1300.0 1128.5,1295.2 1129.5,1293.4 1130.5,1301.4 1131.5,1300.2 1132.5,1286.7 1133.5,1302.2 1134.5,1302.9 1135.5,1298.5 1136.5,1299.6 1137.5,1299.2 1138.5,1299.3 1139.5,1295.4 1140.5,1304.5 1141.5,1306.0 1142.5,1292.8 1143.5,1297.6 1144.5,1292.4 1145.5,1294.8 1146.5,1303.9 1147.5,1297.3 1148.5,1298.6 1149.5,1295.2 1150.5,1313.7 1151.5,1305.3 1152.5,1299.9 1153.5,1298.5 1154.5,1309.4 1155.5,1305.6 1156.5,1299.2 1157.5,1296.2 1158.5,1291.2 1159.5,1306.6 1160.5,1309.1 1161.5,1313.6 1162.5,1299.1 1163.5,1303.4 1164.5,1286.9 1165.5,1301.7 1166.5,1293.2 1167.5,1292.8 1168.5,1292.7 1169.5,1292.5 1170.5,1294.4 1171.5,1300.9 1172.5,1293.4 1173.5,1295.2 1174.5,1296.3 1175.5,1311.2 1176.5,1302.5 1177.5,1293.8 1178.5,1302.5 1179.5,1308.6 1180.5,1296.2 1181.5,1302.1 1182.5,1304.5 1183.5,1289.7 1184.5,1298.0 1185.5,1296.4 1186.5,1302.8 1187.5,1306.2 1188.5,1294.5 1189.5,1289.1 1190.5,1294.4 1191.5,1297.0 1192.5,1293.6 1193.5,1298.7 1194.5,1290.9 1195.5,1300.7 1196.5,1302.1 1197.5,1311.0 1198.5,1296.3 1199.5,1304.0 1200.5,1293.3 1201.5,1293.4 1202.5,1292.8 1203.5,1296.3 1204.5,1290.2 1205.5,1287.6 1206.5,1312.6 1207.5,1295.3 1208.5,1296.9 1209.5,1298.2 1210.5,1294.7 1211.5,1295.8 1212.5,1304.7 1213.5,1298.8 1214.5,1304.6 1215.5,1290.7 1216.5,1300.2 1217.5,1292.1 1218.5,1290.1 1219.5,1301.9 1220.5,1298.5 1221.5,1301.7 1222.5,1301.2 1223.5,1286.7 1224.5,1300.6 1225.5,1310.1 1226.5,1298.0 1227.5,1303.5 1228.5,1306.7 1229.5,1309.2 1230.5,1284.9 1231.5,1295.2 1232.5,1296.0 1233.5,1295.4 1234.5,1304.4 1235.5,1290.3 1236.5,1284.9 1237.5,1298.7 1238.5,1295.4 1239.5,1304.1 1240.5,1304.4 1241.5,1299.3 1242.5,1306.1 1243.5,1290.0 1244.5,1296.4 1245.5,1289.8 1246.5,1309.7 1247.5,1295.4 1248.5,1303.4 1249.5,1299.9 1250.5,1301.9 1251.5,1303.7 1252.5,1304.4 1253.5,1302.1 1254.5,1297.4 1255.5,1301.8 1256.5,1286.8 1257.5,1292.0 1258.5,1306.7 1259.5,1300.6 1260.5,1289.4 1261.5,1290.1 1262.5,1290.4 1263.5,1294.6 1264.5,1302.6 1265.5,1296.5 1266.5,1301.9 1267.5,1290.0 1268.5,1296.1 1269.5,1297.8 1270.5,1299.5 1271.5,1301.6 1272.5,1297.4 1273.5,1302.3 1274.5,1305.1 1275.5,1300.0 1276.5,1290.4 1277.5,1293.1 1278.5,1292.2 1279.5,1307.4 1280.5,1302.1 1281.5,1297.0 1282.5,1293.6 1283.5,1293.6 1284.5,1306.8 1285.5,1295.7 1286.5,1293.5 1287.5,1292.5 1288.5,1301.3 1289.5,1287.0 1290.5,1293.7 1291.5,1300.9 1292.5,1302.2 1293.5,1300.6 1294.5,1295.0 1295.5,1302.2 1296.5,1308.0 1297.5,1292.2 1298.5,1292.2 1299.5,1294.7 1300.5,1297.2 1301.5,1293.8 1302.5,1293.2 1303.5,1284.9 1304.5,1302.5 1305.5,1291.1 1306.5,1296.7 1307.5,1293.8 1308.5,1301.3 1309.5,1290.2 1310.5,1290.7 1311.5,1297.0 1312.5,1296.9 1313.5,1293.9 1314.5,1299.2 1315.5,1293.9 1316.5,1294.6 1317.5,1290.3 1318.5,1296.3 1319.5,1302.8 1320.5,1295.7 1321.5,1296.1 1322.5,1303.0 1323.5,1294.3 1324.5,1293.1 1325.5,1297.0 1326.5,1307.9 1327.5,1294.4 1328.5,1296.0 1329.5,1298.6 1330.5,1294.1 1331.5,1294.5 1332.5,1305.2 1333.5,1287.5 1334.5,1299.7 1335.5,1302.7 1336.5,1304.9 1337.5,1297.9 1338.5,1299.7 1339.5,1293.4 1340.5,1287.5 1341.5,1297.8 1342.5,1297.6 1343.5,1299.3 1344.5,1305.4 1345.5,1313.6 1346.5,1299.9 1347.5,1308.3 1348.5,1297.7 1349.5,1298.8 1350.5,1291.3 1351.5,1298.1 1352.5,1293.2 1353.5,1297.8 1354.5,1289.3 1355.5,1304.0 1356.5,1288.6 1357.5,1299.7 1358.5,1285.8 1359.5,1296.3 1360.5,1298.1 1361.5,1302.0 1362.5,1306.9 1363.5,1290.0 1364.5,1295.6 1365.5,1295.1 1366.5,1296.5 1367.5,1304.7 1368.5,1293.1 1369.5,1290.8 1370.5,1293.0 1371.5,1302.4 1372.5,1292.2 1373.5,1286.9 1374.5,1293.9 1375.5,1304.4 1376.5,1307.2 1377.5,1292.8 1378.5,1292.8 1379.5,1301.4 1380.5,1303.3 1381.5,1296.1 1382.5,1296.6 1383.5,1301.7 1384.5,1288.2 1385.5,1306.2 1386.5,1290.8 1387.5,1286.3 1388.5,1305.2 1389.5,1296.5 1390.5,1301.8 1391.5,1288.2 1392.5,1298.3 1393.5,1298.2 1394.5,1297.6 1395.5,1297.3 1396.5,1295.8 1397.5,1295.9 1398.5,1290.1 1399.5,1310.1 1400.5,1293.5 1401.5,1289.5 1402.5,1298.2 1403.5,1294.8 1404.5,1292.2 1405.5,1313.4 1406.5,1298.8 1407.5,1286.8 1408.5,1293.5 1409.5,1294.0 1410.5,1295.6 1411.5,1300.4 1412.5,1299.3 1413.5,1309.2 1414.5,1293.9 1415.5,1294.5 1416.5,1303.7 1417.5,1304.6 1418.5,1294.8 1419.5,1293.4 1420.5,1304.2 1421.5,1300.7 1422.5,1304.3 1423.5,1304.0 1424.5,1299.9 1425.5,1297.6 1426.5,1297.4 1427.5,1296.3 1428.5,1289.6 1429.5,1300.0 1430.5,1302.2 1431.5,1301.3 1432.5,1292.7 1433.5,1295.1 1434.5,1304.3 1435.5,1304.0 1438.0,1310.0 1438.5,1319.0" stroke="#ff8a6a"/>
<path d="M220.5 1097V1136M221.5 1016V1036" stroke="#e224a6"/><path d="M220.5 1277V1300" stroke="#ff8a6a"/>
</svg>
<span class="t" style="left:199.00px;top:1009px;font-size:10px;line-height:16px;color:#dedede;font-weight:bold;letter-spacing:0.800px;">0.0</span>
<span class="t" style="left:188.51px;top:1089px;font-size:10px;line-height:16px;color:#dedede;font-weight:bold;letter-spacing:0.800px;">-10.0</span>
<span class="t" style="left:188.51px;top:1168px;font-size:10px;line-height:16px;color:#dedede;font-weight:bold;letter-spacing:0.800px;">-20.0</span>
<span class="t" style="left:188.51px;top:1248px;font-size:10px;line-height:16px;color:#dedede;font-weight:bold;letter-spacing:0.800px;">-30.0</span>
<span class="t" style="left:217.72px;top:1323.5px;font-size:10px;line-height:16px;color:#dedede;font-weight:bold;letter-spacing:0.000px;">0</span>
<span class="t" style="left:307.99px;top:1323.5px;font-size:10px;line-height:16px;color:#dedede;font-weight:bold;letter-spacing:1.000px;">2,000</span>
<span class="t" style="left:408.99px;top:1323.5px;font-size:10px;line-height:16px;color:#dedede;font-weight:bold;letter-spacing:1.000px;">4,000</span>
<span class="t" style="left:510.99px;top:1323.5px;font-size:10px;line-height:16px;color:#dedede;font-weight:bold;letter-spacing:1.000px;">6,000</span>
<span class="t" style="left:611.99px;top:1323.5px;font-size:10px;line-height:16px;color:#dedede;font-weight:bold;letter-spacing:1.000px;">8,000</span>
<span class="t" style="left:710.71px;top:1323.5px;font-size:10px;line-height:16px;color:#dedede;font-weight:bold;letter-spacing:1.000px;">10,000</span>
<span class="t" style="left:811.71px;top:1323.5px;font-size:10px;line-height:16px;color:#dedede;font-weight:bold;letter-spacing:1.000px;">12,000</span>
<span class="t" style="left:913.71px;top:1323.5px;font-size:10px;line-height:16px;color:#dedede;font-weight:bold;letter-spacing:1.000px;">14,000</span>
<span class="t" style="left:1014.71px;top:1323.5px;font-size:10px;line-height:16px;color:#dedede;font-weight:bold;letter-spacing:1.000px;">16,000</span>
<span class="t" style="left:1116.71px;top:1323.5px;font-size:10px;line-height:16px;color:#dedede;font-weight:bold;letter-spacing:1.000px;">18,000</span>
<span class="t" style="left:1217.71px;top:1323.5px;font-size:10px;line-height:16px;color:#dedede;font-weight:bold;letter-spacing:1.000px;">20,000</span>
<span class="t" style="left:1319.71px;top:1323.5px;font-size:10px;line-height:16px;color:#dedede;font-weight:bold;letter-spacing:1.000px;">22,000</span>
<span class="t" style="left:1421.41px;top:1323.5px;font-size:10px;line-height:16px;color:#dedede;font-weight:bold;letter-spacing:1.000px;">24,000</span>
<span class="t" style="left:786.40px;top:1341px;font-size:11px;line-height:16px;color:#fff;font-weight:bold;transform:scaleX(1.0773);transform-origin:0 0;">Fréquence (Hz)</span>
<div class="a" style="left:131.0px;top:1143px;width:85px;height:16px;transform:rotate(-90deg);transform-origin:50% 50%"><span class="t" style="left:0.00px;top:0px;font-size:11px;line-height:16px;color:#fff;font-weight:bold;transform:scaleX(1.0784);transform-origin:0 0;">Amplitude (dB)</span></div>
</body></html>
